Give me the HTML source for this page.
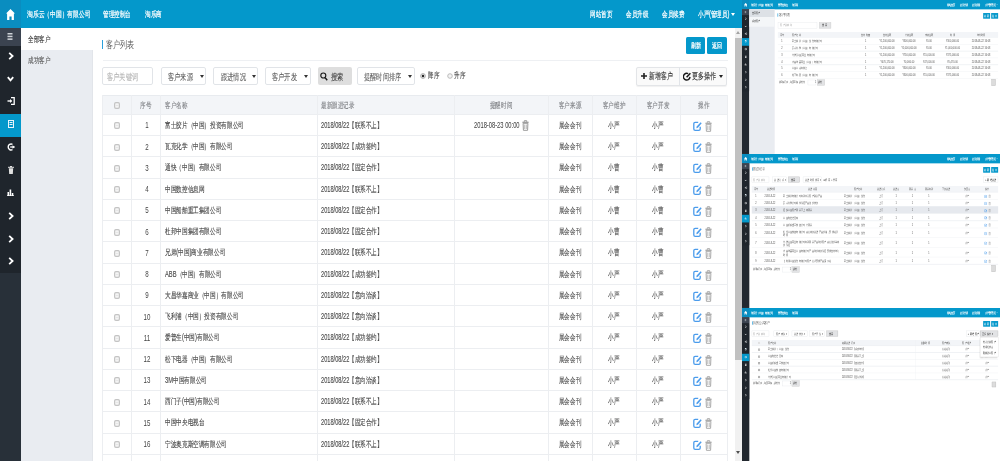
<!DOCTYPE html>
<html><head><meta charset="utf-8"><title>客户列表</title><style>
*{margin:0;padding:0;box-sizing:border-box}
html,body{width:1000px;height:461px;overflow:hidden;background:#fff;font-family:"Liberation Sans",sans-serif}
.a{position:absolute}
.t{position:absolute;white-space:nowrap;transform-origin:0 50%;-webkit-text-stroke:0.12px currentColor}
.th .t{-webkit-text-stroke:0}
</style></head>
<body>
<div style="position:absolute;left:0;top:0;width:1000px;height:461px;will-change:transform">
<div class="a" style="left:0px;top:0px;width:742px;height:28.3px;background:#0498cb"></div>
<div class="a" style="left:0px;top:0px;width:20.5px;height:28.3px;background:#0a8dc0"></div>
<svg class="a" style="left:6.25px;top:8.75px" width="9" height="11" viewBox="0 0 9 11"><path d="M4.5 0 L9 4.6 H7.9 V11 H5.6 V7.4 H3.4 V11 H1.1 V4.6 H0 Z" fill="#fff"/></svg>
<div class="t" style="left:27.2px;top:10.45px;font-size:8.3px;line-height:8.3px;color:#fff;transform:scaleX(0.72);-webkit-text-stroke:0.2px currentColor;">淘乐云（中国）有限公司</div>
<div class="t" style="left:103.2px;top:10.45px;font-size:8.3px;line-height:8.3px;color:#fff;transform:scaleX(0.69);-webkit-text-stroke:0.2px currentColor;">管理控制台</div>
<div class="t" style="left:144.8px;top:10.45px;font-size:8.3px;line-height:8.3px;color:#fff;transform:scaleX(0.69);-webkit-text-stroke:0.2px currentColor;">淘乐商</div>
<div class="t" style="left:589.6px;top:10.45px;font-size:8.3px;line-height:8.3px;color:#fff;transform:scaleX(0.69);-webkit-text-stroke:0.2px currentColor;">网站首页</div>
<div class="t" style="left:626.4px;top:10.45px;font-size:8.3px;line-height:8.3px;color:#fff;transform:scaleX(0.69);-webkit-text-stroke:0.2px currentColor;">会员升级</div>
<div class="t" style="left:662.4px;top:10.45px;font-size:8.3px;line-height:8.3px;color:#fff;transform:scaleX(0.69);-webkit-text-stroke:0.2px currentColor;">会员续费</div>
<div class="t" style="left:698px;top:10.45px;font-size:8.3px;line-height:8.3px;color:#fff;transform:scaleX(0.69);-webkit-text-stroke:0.2px currentColor;">小严(管理员)</div>
<svg class="a" style="left:731.00px;top:13.10px" width="4" height="3" viewBox="0 0 4 3"><path d="M0 0 L4 0 L2 3 Z" fill="#fff"/></svg>
<div class="a" style="left:0px;top:28px;width:20.5px;height:433px;background:#283039"></div>
<div class="a" style="left:0px;top:28px;width:20.5px;height:17.5px;background:#3b4350"></div>
<div class="a" style="left:0px;top:45.5px;width:20.5px;height:227.9px;background:#1f252c"></div>
<div class="a" style="left:0px;top:113.87px;width:20.5px;height:22.79px;background:#0498cb"></div>
<svg class="a" style="left:7.10px;top:33.30px" width="6" height="7" viewBox="0 0 6 7"><rect x="0.5" y="0" width="5" height="1.5" fill="#cfd3d8"/><rect x="0.5" y="2.7" width="5" height="1.5" fill="#cfd3d8"/><rect x="0.5" y="5.4" width="5" height="1.5" fill="#cfd3d8"/></svg>
<svg class="a" style="left:7.90px;top:52.00px" width="6" height="8" viewBox="0 0 6 8"><path d="M1.2 0.8 L4.6 4 L1.2 7.2" stroke="#fff" stroke-width="1.8" fill="none"/></svg>
<svg class="a" style="left:6.90px;top:75.50px" width="7" height="6" viewBox="0 0 7 6"><path d="M0.8 1.2 L3.5 4.4 L6.2 1.2" stroke="#fff" stroke-width="1.8" fill="none"/></svg>
<svg class="a" style="left:6.80px;top:97.00px" width="8" height="8" viewBox="0 0 8 8"><path d="M4 0.7 H7.2 V7.3 H4" stroke="#fff" stroke-width="1.3" fill="none"/><path d="M0.5 4 H4.5" stroke="#fff" stroke-width="1.4"/><path d="M3 2 L5.2 4 L3 6 Z" fill="#fff"/></svg>
<svg class="a" style="left:8.10px;top:120.40px" width="6" height="8" viewBox="0 0 6 8"><rect x="0.5" y="0.5" width="5" height="7" stroke="#e8f4fb" stroke-width="1" fill="none"/><rect x="1.5" y="2" width="3" height="1" fill="#e8f4fb"/><rect x="1.5" y="4" width="3" height="1" fill="#e8f4fb"/></svg>
<svg class="a" style="left:6.90px;top:142.80px" width="8" height="8" viewBox="0 0 8 8"><path d="M5.5 1.3 A3 3 0 1 0 5.5 6.7" stroke="#fff" stroke-width="1.4" fill="none"/><path d="M3.2 4 H7.5" stroke="#fff" stroke-width="1.3"/><path d="M5.5 2.2 L7.8 4 L5.5 5.8 Z" fill="#fff"/></svg>
<svg class="a" style="left:7.60px;top:165.60px" width="6" height="8" viewBox="0 0 6 8"><rect x="0" y="0.8" width="6" height="1" fill="#e0e0e0"/><rect x="2" y="0" width="2" height="1" fill="#e0e0e0"/><path d="M0.8 2.3 H5.2 L4.8 8 H1.2 Z" fill="#e0e0e0"/></svg>
<svg class="a" style="left:7.10px;top:189.00px" width="7" height="7" viewBox="0 0 7 7"><rect x="0.5" y="3" width="1.5" height="4" fill="#fff"/><rect x="2.6" y="0.5" width="1.6" height="6.5" fill="#fff"/><rect x="4.8" y="4" width="1.5" height="3" fill="#fff"/><rect x="0" y="6.3" width="7" height="0.8" fill="#fff"/></svg>
<svg class="a" style="left:7.90px;top:211.60px" width="6" height="8" viewBox="0 0 6 8"><path d="M1.2 0.8 L4.6 4 L1.2 7.2" stroke="#fff" stroke-width="1.8" fill="none"/></svg>
<svg class="a" style="left:7.90px;top:234.70px" width="6" height="8" viewBox="0 0 6 8"><path d="M1.2 0.8 L4.6 4 L1.2 7.2" stroke="#fff" stroke-width="1.8" fill="none"/></svg>
<svg class="a" style="left:7.90px;top:257.30px" width="6" height="8" viewBox="0 0 6 8"><path d="M1.2 0.8 L4.6 4 L1.2 7.2" stroke="#fff" stroke-width="1.8" fill="none"/></svg>
<div class="a" style="left:20.5px;top:28px;width:72px;height:433px;background:#e9ecf1;border-right:1px solid #e2e5ea"></div>
<div class="a" style="left:20.5px;top:28px;width:72px;height:22.3px;background:#fff"></div>
<div class="t" style="left:27.6px;top:35.90px;font-size:7.6px;line-height:7.6px;color:#333;transform:scaleX(0.69);">全部客户</div>
<div class="t" style="left:27.6px;top:57.20px;font-size:7.6px;line-height:7.6px;color:#555;transform:scaleX(0.69);">成功客户</div>
<div class="a" style="left:101.8px;top:40px;width:1.3px;height:9.3px;background:#2aa0dc"></div>
<div class="t" style="left:106px;top:39.85px;font-size:10.3px;line-height:10.3px;color:#555;transform:scaleX(0.7);-webkit-text-stroke:0px currentColor;">客户列表</div>
<div class="a" style="left:102.5px;top:59.7px;width:625px;height:1px;background:#eef0f3"></div>
<div class="a" style="left:686px;top:37.4px;width:19.3px;height:16.7px;background:#0498cb;border-radius:1.5px"></div>
<div class="t" style="left:695.8px;top:41.80px;font-size:7.2px;line-height:7.2px;color:#fff;transform:scaleX(0.72) translateX(-50%);-webkit-text-stroke:0.22px currentColor;">刷新</div>
<div class="a" style="left:707.4px;top:37.4px;width:19.5px;height:16.7px;background:#0498cb;border-radius:1.5px"></div>
<div class="t" style="left:717.2px;top:41.80px;font-size:7.2px;line-height:7.2px;color:#fff;transform:scaleX(0.72) translateX(-50%);-webkit-text-stroke:0.22px currentColor;">返回</div>
<div class="a" style="left:102.2px;top:66.9px;width:51.3px;height:18.4px;border:1px solid #e1e4e8;border-radius:2px;background:#fff"></div>
<div class="t" style="left:107.4px;top:72.80px;font-size:8.8px;line-height:8.8px;color:#b5b5b5;transform:scaleX(0.69);">客户关键词</div>
<div class="a" style="left:161px;top:67px;width:45px;height:18.3px;border:1px solid #e1e4e8;border-radius:2px;background:#fff"></div>
<div class="t" style="left:167.8px;top:72.85px;font-size:8.9px;line-height:8.9px;color:#555;transform:scaleX(0.69);-webkit-text-stroke:0.05px currentColor;">客户来源</div>
<svg class="a" style="left:199.50px;top:75.30px" width="4" height="3" viewBox="0 0 4 3"><path d="M0 0 L4 0 L2 3 Z" fill="#333"/></svg>
<div class="a" style="left:212.8px;top:67px;width:45.39999999999998px;height:18.3px;border:1px solid #e1e4e8;border-radius:2px;background:#fff"></div>
<div class="t" style="left:220.5px;top:72.85px;font-size:8.9px;line-height:8.9px;color:#555;transform:scaleX(0.69);-webkit-text-stroke:0.05px currentColor;">跟进情况</div>
<svg class="a" style="left:251.50px;top:75.30px" width="4" height="3" viewBox="0 0 4 3"><path d="M0 0 L4 0 L2 3 Z" fill="#333"/></svg>
<div class="a" style="left:265.2px;top:67px;width:45.400000000000034px;height:18.3px;border:1px solid #e1e4e8;border-radius:2px;background:#fff"></div>
<div class="t" style="left:272.3px;top:72.85px;font-size:8.9px;line-height:8.9px;color:#555;transform:scaleX(0.69);-webkit-text-stroke:0.05px currentColor;">客户开发</div>
<svg class="a" style="left:304.20px;top:75.30px" width="4" height="3" viewBox="0 0 4 3"><path d="M0 0 L4 0 L2 3 Z" fill="#333"/></svg>
<div class="a" style="left:317.5px;top:67px;width:34.5px;height:18.3px;background:#dedede;border-radius:2px"></div>
<svg class="a" style="left:320.40px;top:71.70px" width="8" height="9" viewBox="0 0 8 9"><circle cx="3.3" cy="3.5" r="2.5" stroke="#1a1a1a" stroke-width="1.15" fill="none"/><path d="M5.1 5.6 L7.2 8.2" stroke="#1a1a1a" stroke-width="1.5"/></svg>
<div class="t" style="left:330.5px;top:72.70px;font-size:8.6px;line-height:8.6px;color:#444;transform:scaleX(0.69);">搜索</div>
<div class="a" style="left:357px;top:67px;width:57.5px;height:18.3px;border:1px solid #e1e4e8;border-radius:2px;background:#fff"></div>
<div class="t" style="left:363.5px;top:72.85px;font-size:8.9px;line-height:8.9px;color:#555;transform:scaleX(0.69);-webkit-text-stroke:0.05px currentColor;">提醒时间排序</div>
<svg class="a" style="left:407.50px;top:75.30px" width="4" height="3" viewBox="0 0 4 3"><path d="M0 0 L4 0 L2 3 Z" fill="#333"/></svg>
<svg class="a" style="left:420.20px;top:73.00px" width="6" height="6" viewBox="0 0 6 6"><circle cx="3" cy="3" r="2.4" stroke="#aaa" stroke-width="0.9" fill="#e6e6e6"/><circle cx="3" cy="3" r="1.2" fill="#222"/></svg>
<div class="t" style="left:427.5px;top:71.70px;font-size:8.2px;line-height:8.2px;color:#444;transform:scaleX(0.69);">降序</div>
<svg class="a" style="left:446.60px;top:73.00px" width="6" height="6" viewBox="0 0 6 6"><circle cx="3" cy="3" r="2.3" stroke="#b5b5b5" stroke-width="0.9" fill="#f4f4f4"/></svg>
<div class="t" style="left:453.5px;top:71.70px;font-size:8.2px;line-height:8.2px;color:#444;transform:scaleX(0.69);">升序</div>
<div class="a" style="left:635.5px;top:67.2px;width:91.2px;height:18.4px;border:1px solid #e3e5e8;border-radius:2px;background:#fafafa;box-shadow:0 0.5px 1px rgba(0,0,0,.06)"></div>
<div class="a" style="left:678.6px;top:67.2px;width:1px;height:18.4px;background:#e1e4e8"></div>
<svg class="a" style="left:640.50px;top:73.40px" width="6" height="6" viewBox="0 0 6 6"><path d="M3 0 V6 M0 3 H6" stroke="#222" stroke-width="1.6"/></svg>
<div class="t" style="left:649.2px;top:72.30px;font-size:8.6px;line-height:8.6px;color:#333;transform:scaleX(0.65);">新增客户</div>
<svg class="a" style="left:683.00px;top:72.00px" width="8" height="9" viewBox="0 0 8 9"><path d="M5.2 1.6 A3.3 3.4 0 1 0 7 4.9" stroke="#1a1a1a" stroke-width="1.4" fill="none"/><path d="M3.6 5.2 L7.4 1.2" stroke="#1a1a1a" stroke-width="1.5"/></svg>
<div class="t" style="left:691.5px;top:72.30px;font-size:8.6px;line-height:8.6px;color:#333;transform:scaleX(0.67);">更多操作</div>
<svg class="a" style="left:718.60px;top:75.30px" width="4" height="3" viewBox="0 0 4 3"><path d="M0 0 L4 0 L2 3 Z" fill="#222"/></svg>
<div class="a" style="left:102px;top:95px;width:625px;height:19.25px;background:#f3f5f8"></div>
<div class="a" style="left:102px;top:95px;width:625px;height:1px;background:#e8ebef"></div>
<div class="a" style="left:102px;top:113.75px;width:625px;height:1px;background:#eceef1"></div>
<div class="a" style="left:102px;top:135.0px;width:625px;height:1px;background:#eceef1"></div>
<div class="a" style="left:102px;top:156.25px;width:625px;height:1px;background:#eceef1"></div>
<div class="a" style="left:102px;top:177.5px;width:625px;height:1px;background:#eceef1"></div>
<div class="a" style="left:102px;top:198.75px;width:625px;height:1px;background:#eceef1"></div>
<div class="a" style="left:102px;top:220.0px;width:625px;height:1px;background:#eceef1"></div>
<div class="a" style="left:102px;top:241.25px;width:625px;height:1px;background:#eceef1"></div>
<div class="a" style="left:102px;top:262.5px;width:625px;height:1px;background:#eceef1"></div>
<div class="a" style="left:102px;top:283.75px;width:625px;height:1px;background:#eceef1"></div>
<div class="a" style="left:102px;top:305.0px;width:625px;height:1px;background:#eceef1"></div>
<div class="a" style="left:102px;top:326.25px;width:625px;height:1px;background:#eceef1"></div>
<div class="a" style="left:102px;top:347.5px;width:625px;height:1px;background:#eceef1"></div>
<div class="a" style="left:102px;top:368.75px;width:625px;height:1px;background:#eceef1"></div>
<div class="a" style="left:102px;top:390.0px;width:625px;height:1px;background:#eceef1"></div>
<div class="a" style="left:102px;top:411.25px;width:625px;height:1px;background:#eceef1"></div>
<div class="a" style="left:102px;top:432.5px;width:625px;height:1px;background:#eceef1"></div>
<div class="a" style="left:102px;top:453.75px;width:625px;height:1px;background:#eceef1"></div>
<div class="a" style="left:102px;top:475.0px;width:625px;height:1px;background:#eceef1"></div>
<div class="a" style="left:101.5px;top:95px;width:1px;height:366px;background:#eceef1"></div>
<div class="a" style="left:131.0px;top:95px;width:1px;height:366px;background:#eceef1"></div>
<div class="a" style="left:160.1px;top:95px;width:1px;height:366px;background:#eceef1"></div>
<div class="a" style="left:316.5px;top:95px;width:1px;height:366px;background:#eceef1"></div>
<div class="a" style="left:453.5px;top:95px;width:1px;height:366px;background:#eceef1"></div>
<div class="a" style="left:547.5px;top:95px;width:1px;height:366px;background:#eceef1"></div>
<div class="a" style="left:592.0px;top:95px;width:1px;height:366px;background:#eceef1"></div>
<div class="a" style="left:635.5px;top:95px;width:1px;height:366px;background:#eceef1"></div>
<div class="a" style="left:679.5px;top:95px;width:1px;height:366px;background:#eceef1"></div>
<div class="a" style="left:726.5px;top:95px;width:1px;height:366px;background:#eceef1"></div>
<svg class="a" style="left:113.50px;top:102.10px" width="6" height="7" viewBox="0 0 6 7"><rect x="0.6" y="0.6" width="4.8" height="5.8" rx="1.3" stroke="#c4c4c4" stroke-width="1.2" fill="#f4f4f4"/><path d="M1.8 3.5 H4.2" stroke="#dcdcdc" stroke-width="0.6"/></svg>
<div class="t" style="left:146px;top:101.65px;font-size:7.9px;line-height:7.9px;color:#7d7f83;transform:scaleX(0.69) translateX(-50%);">序号</div>
<div class="t" style="left:165px;top:101.65px;font-size:7.9px;line-height:7.9px;color:#7d7f83;transform:scaleX(0.69);">客户名称</div>
<div class="t" style="left:321px;top:101.65px;font-size:7.9px;line-height:7.9px;color:#7d7f83;transform:scaleX(0.69);">最新跟进记录</div>
<div class="t" style="left:501px;top:101.65px;font-size:7.9px;line-height:7.9px;color:#7d7f83;transform:scaleX(0.69) translateX(-50%);">提醒时间</div>
<div class="t" style="left:570px;top:101.65px;font-size:7.9px;line-height:7.9px;color:#7d7f83;transform:scaleX(0.69) translateX(-50%);">客户来源</div>
<div class="t" style="left:614px;top:101.65px;font-size:7.9px;line-height:7.9px;color:#7d7f83;transform:scaleX(0.69) translateX(-50%);">客户维护</div>
<div class="t" style="left:658px;top:101.65px;font-size:7.9px;line-height:7.9px;color:#7d7f83;transform:scaleX(0.69) translateX(-50%);">客户开发</div>
<div class="t" style="left:703.5px;top:101.65px;font-size:7.9px;line-height:7.9px;color:#7d7f83;transform:scaleX(0.69) translateX(-50%);">操作</div>
<svg class="a" style="left:113.50px;top:122.47px" width="6" height="7" viewBox="0 0 6 7"><rect x="0.6" y="0.6" width="4.8" height="5.8" rx="1.3" stroke="#c4c4c4" stroke-width="1.2" fill="#f4f4f4"/><path d="M1.8 3.5 H4.2" stroke="#dcdcdc" stroke-width="0.6"/></svg>
<div class="t" style="left:146.6px;top:122.38px;font-size:8.2px;line-height:8.2px;color:#444;transform:scaleX(0.75) translateX(-50%);-webkit-text-stroke:0px currentColor;">1</div>
<div class="t" style="left:164.8px;top:121.88px;font-size:8.2px;line-height:8.2px;color:#464646;transform:scaleX(0.705);">富士胶片（中国）投资有限公司</div>
<div class="t" style="left:321px;top:121.88px;font-size:8.2px;line-height:8.2px;color:#464646;transform:scaleX(0.69);">2018/08/22【联系不上】</div>
<div class="t" style="left:474px;top:122.28px;font-size:8.2px;line-height:8.2px;color:#444;transform:scaleX(0.705);-webkit-text-stroke:0.05px currentColor;">2018-08-23 00:00</div>
<svg class="a" style="left:521.50px;top:120.47px" width="7" height="11" viewBox="0 0 7 11"><path d="M0.4 2.3 H6.6" stroke="#999" stroke-width="1.3"/><path d="M2.3 1.8 V0.7 H4.7 V1.8" stroke="#999" stroke-width="1" fill="none"/><path d="M1.1 3.3 H5.9 L5.6 10.3 H1.4 Z" stroke="#999" stroke-width="1" fill="none"/><path d="M2.7 4.5 V9 M4.3 4.5 V9" stroke="#999" stroke-width="0.7"/></svg>
<div class="t" style="left:570px;top:121.88px;font-size:8.2px;line-height:8.2px;color:#555;transform:scaleX(0.69) translateX(-50%);">展会会刊</div>
<div class="t" style="left:614px;top:121.88px;font-size:8.2px;line-height:8.2px;color:#555;transform:scaleX(0.69) translateX(-50%);">小严</div>
<div class="t" style="left:658px;top:121.88px;font-size:8.2px;line-height:8.2px;color:#555;transform:scaleX(0.69) translateX(-50%);">小严</div>
<svg class="a" style="left:693.20px;top:120.97px" width="9" height="10" viewBox="0 0 9 10"><path d="M5.2 1.4 H2.2 Q0.8 1.4 0.8 2.8 V8 Q0.8 9.3 2.2 9.3 H5.8 Q7.2 9.3 7.2 8 V5.8" stroke="#4b9cec" stroke-width="1.3" fill="none"/><path d="M3.3 7.3 L3.7 5.6 L7.6 1.3 L8.7 2.3 L4.9 6.8 Z" fill="#4b9cec"/></svg>
<svg class="a" style="left:705.00px;top:120.88px" width="7" height="11" viewBox="0 0 7 11"><path d="M0.4 2.3 H6.6" stroke="#a8a8a8" stroke-width="1.3"/><path d="M2.3 1.8 V0.7 H4.7 V1.8" stroke="#a8a8a8" stroke-width="1" fill="none"/><path d="M1.1 3.3 H5.9 L5.6 10.3 H1.4 Z" stroke="#a8a8a8" stroke-width="1" fill="none"/><path d="M2.7 4.5 V9 M4.3 4.5 V9" stroke="#a8a8a8" stroke-width="0.7"/></svg>
<svg class="a" style="left:113.50px;top:143.72px" width="6" height="7" viewBox="0 0 6 7"><rect x="0.6" y="0.6" width="4.8" height="5.8" rx="1.3" stroke="#c4c4c4" stroke-width="1.2" fill="#f4f4f4"/><path d="M1.8 3.5 H4.2" stroke="#dcdcdc" stroke-width="0.6"/></svg>
<div class="t" style="left:146.6px;top:143.62px;font-size:8.2px;line-height:8.2px;color:#444;transform:scaleX(0.75) translateX(-50%);-webkit-text-stroke:0px currentColor;">2</div>
<div class="t" style="left:164.8px;top:143.12px;font-size:8.2px;line-height:8.2px;color:#464646;transform:scaleX(0.705);">瓦克化学（中国）有限公司</div>
<div class="t" style="left:321px;top:143.12px;font-size:8.2px;line-height:8.2px;color:#464646;transform:scaleX(0.69);">2018/08/22【成功签约】</div>
<div class="t" style="left:570px;top:143.12px;font-size:8.2px;line-height:8.2px;color:#555;transform:scaleX(0.69) translateX(-50%);">展会会刊</div>
<div class="t" style="left:614px;top:143.12px;font-size:8.2px;line-height:8.2px;color:#555;transform:scaleX(0.69) translateX(-50%);">小严</div>
<div class="t" style="left:658px;top:143.12px;font-size:8.2px;line-height:8.2px;color:#555;transform:scaleX(0.69) translateX(-50%);">小严</div>
<svg class="a" style="left:693.20px;top:142.22px" width="9" height="10" viewBox="0 0 9 10"><path d="M5.2 1.4 H2.2 Q0.8 1.4 0.8 2.8 V8 Q0.8 9.3 2.2 9.3 H5.8 Q7.2 9.3 7.2 8 V5.8" stroke="#4b9cec" stroke-width="1.3" fill="none"/><path d="M3.3 7.3 L3.7 5.6 L7.6 1.3 L8.7 2.3 L4.9 6.8 Z" fill="#4b9cec"/></svg>
<svg class="a" style="left:705.00px;top:142.12px" width="7" height="11" viewBox="0 0 7 11"><path d="M0.4 2.3 H6.6" stroke="#a8a8a8" stroke-width="1.3"/><path d="M2.3 1.8 V0.7 H4.7 V1.8" stroke="#a8a8a8" stroke-width="1" fill="none"/><path d="M1.1 3.3 H5.9 L5.6 10.3 H1.4 Z" stroke="#a8a8a8" stroke-width="1" fill="none"/><path d="M2.7 4.5 V9 M4.3 4.5 V9" stroke="#a8a8a8" stroke-width="0.7"/></svg>
<svg class="a" style="left:113.50px;top:164.97px" width="6" height="7" viewBox="0 0 6 7"><rect x="0.6" y="0.6" width="4.8" height="5.8" rx="1.3" stroke="#c4c4c4" stroke-width="1.2" fill="#f4f4f4"/><path d="M1.8 3.5 H4.2" stroke="#dcdcdc" stroke-width="0.6"/></svg>
<div class="t" style="left:146.6px;top:164.88px;font-size:8.2px;line-height:8.2px;color:#444;transform:scaleX(0.75) translateX(-50%);-webkit-text-stroke:0px currentColor;">3</div>
<div class="t" style="left:164.8px;top:164.38px;font-size:8.2px;line-height:8.2px;color:#464646;transform:scaleX(0.705);">通快（中国）有限公司</div>
<div class="t" style="left:321px;top:164.38px;font-size:8.2px;line-height:8.2px;color:#464646;transform:scaleX(0.69);">2018/08/22【固定合作】</div>
<div class="t" style="left:570px;top:164.38px;font-size:8.2px;line-height:8.2px;color:#555;transform:scaleX(0.69) translateX(-50%);">展会会刊</div>
<div class="t" style="left:614px;top:164.38px;font-size:8.2px;line-height:8.2px;color:#555;transform:scaleX(0.69) translateX(-50%);">小曹</div>
<div class="t" style="left:658px;top:164.38px;font-size:8.2px;line-height:8.2px;color:#555;transform:scaleX(0.69) translateX(-50%);">小曹</div>
<svg class="a" style="left:693.20px;top:163.47px" width="9" height="10" viewBox="0 0 9 10"><path d="M5.2 1.4 H2.2 Q0.8 1.4 0.8 2.8 V8 Q0.8 9.3 2.2 9.3 H5.8 Q7.2 9.3 7.2 8 V5.8" stroke="#4b9cec" stroke-width="1.3" fill="none"/><path d="M3.3 7.3 L3.7 5.6 L7.6 1.3 L8.7 2.3 L4.9 6.8 Z" fill="#4b9cec"/></svg>
<svg class="a" style="left:705.00px;top:163.38px" width="7" height="11" viewBox="0 0 7 11"><path d="M0.4 2.3 H6.6" stroke="#a8a8a8" stroke-width="1.3"/><path d="M2.3 1.8 V0.7 H4.7 V1.8" stroke="#a8a8a8" stroke-width="1" fill="none"/><path d="M1.1 3.3 H5.9 L5.6 10.3 H1.4 Z" stroke="#a8a8a8" stroke-width="1" fill="none"/><path d="M2.7 4.5 V9 M4.3 4.5 V9" stroke="#a8a8a8" stroke-width="0.7"/></svg>
<svg class="a" style="left:113.50px;top:186.22px" width="6" height="7" viewBox="0 0 6 7"><rect x="0.6" y="0.6" width="4.8" height="5.8" rx="1.3" stroke="#c4c4c4" stroke-width="1.2" fill="#f4f4f4"/><path d="M1.8 3.5 H4.2" stroke="#dcdcdc" stroke-width="0.6"/></svg>
<div class="t" style="left:146.6px;top:186.12px;font-size:8.2px;line-height:8.2px;color:#444;transform:scaleX(0.75) translateX(-50%);-webkit-text-stroke:0px currentColor;">4</div>
<div class="t" style="left:164.8px;top:185.62px;font-size:8.2px;line-height:8.2px;color:#464646;transform:scaleX(0.705);">中国数控信息网</div>
<div class="t" style="left:321px;top:185.62px;font-size:8.2px;line-height:8.2px;color:#464646;transform:scaleX(0.69);">2018/08/22【联系不上】</div>
<div class="t" style="left:570px;top:185.62px;font-size:8.2px;line-height:8.2px;color:#555;transform:scaleX(0.69) translateX(-50%);">展会会刊</div>
<div class="t" style="left:614px;top:185.62px;font-size:8.2px;line-height:8.2px;color:#555;transform:scaleX(0.69) translateX(-50%);">小曹</div>
<div class="t" style="left:658px;top:185.62px;font-size:8.2px;line-height:8.2px;color:#555;transform:scaleX(0.69) translateX(-50%);">小曹</div>
<svg class="a" style="left:693.20px;top:184.72px" width="9" height="10" viewBox="0 0 9 10"><path d="M5.2 1.4 H2.2 Q0.8 1.4 0.8 2.8 V8 Q0.8 9.3 2.2 9.3 H5.8 Q7.2 9.3 7.2 8 V5.8" stroke="#4b9cec" stroke-width="1.3" fill="none"/><path d="M3.3 7.3 L3.7 5.6 L7.6 1.3 L8.7 2.3 L4.9 6.8 Z" fill="#4b9cec"/></svg>
<svg class="a" style="left:705.00px;top:184.62px" width="7" height="11" viewBox="0 0 7 11"><path d="M0.4 2.3 H6.6" stroke="#a8a8a8" stroke-width="1.3"/><path d="M2.3 1.8 V0.7 H4.7 V1.8" stroke="#a8a8a8" stroke-width="1" fill="none"/><path d="M1.1 3.3 H5.9 L5.6 10.3 H1.4 Z" stroke="#a8a8a8" stroke-width="1" fill="none"/><path d="M2.7 4.5 V9 M4.3 4.5 V9" stroke="#a8a8a8" stroke-width="0.7"/></svg>
<svg class="a" style="left:113.50px;top:207.47px" width="6" height="7" viewBox="0 0 6 7"><rect x="0.6" y="0.6" width="4.8" height="5.8" rx="1.3" stroke="#c4c4c4" stroke-width="1.2" fill="#f4f4f4"/><path d="M1.8 3.5 H4.2" stroke="#dcdcdc" stroke-width="0.6"/></svg>
<div class="t" style="left:146.6px;top:207.38px;font-size:8.2px;line-height:8.2px;color:#444;transform:scaleX(0.75) translateX(-50%);-webkit-text-stroke:0px currentColor;">5</div>
<div class="t" style="left:164.8px;top:206.88px;font-size:8.2px;line-height:8.2px;color:#464646;transform:scaleX(0.705);">中国船舶重工集团公司</div>
<div class="t" style="left:321px;top:206.88px;font-size:8.2px;line-height:8.2px;color:#464646;transform:scaleX(0.69);">2018/08/22【固定合作】</div>
<div class="t" style="left:570px;top:206.88px;font-size:8.2px;line-height:8.2px;color:#555;transform:scaleX(0.69) translateX(-50%);">展会会刊</div>
<div class="t" style="left:614px;top:206.88px;font-size:8.2px;line-height:8.2px;color:#555;transform:scaleX(0.69) translateX(-50%);">小曹</div>
<div class="t" style="left:658px;top:206.88px;font-size:8.2px;line-height:8.2px;color:#555;transform:scaleX(0.69) translateX(-50%);">小曹</div>
<svg class="a" style="left:693.20px;top:205.97px" width="9" height="10" viewBox="0 0 9 10"><path d="M5.2 1.4 H2.2 Q0.8 1.4 0.8 2.8 V8 Q0.8 9.3 2.2 9.3 H5.8 Q7.2 9.3 7.2 8 V5.8" stroke="#4b9cec" stroke-width="1.3" fill="none"/><path d="M3.3 7.3 L3.7 5.6 L7.6 1.3 L8.7 2.3 L4.9 6.8 Z" fill="#4b9cec"/></svg>
<svg class="a" style="left:705.00px;top:205.88px" width="7" height="11" viewBox="0 0 7 11"><path d="M0.4 2.3 H6.6" stroke="#a8a8a8" stroke-width="1.3"/><path d="M2.3 1.8 V0.7 H4.7 V1.8" stroke="#a8a8a8" stroke-width="1" fill="none"/><path d="M1.1 3.3 H5.9 L5.6 10.3 H1.4 Z" stroke="#a8a8a8" stroke-width="1" fill="none"/><path d="M2.7 4.5 V9 M4.3 4.5 V9" stroke="#a8a8a8" stroke-width="0.7"/></svg>
<svg class="a" style="left:113.50px;top:228.72px" width="6" height="7" viewBox="0 0 6 7"><rect x="0.6" y="0.6" width="4.8" height="5.8" rx="1.3" stroke="#c4c4c4" stroke-width="1.2" fill="#f4f4f4"/><path d="M1.8 3.5 H4.2" stroke="#dcdcdc" stroke-width="0.6"/></svg>
<div class="t" style="left:146.6px;top:228.62px;font-size:8.2px;line-height:8.2px;color:#444;transform:scaleX(0.75) translateX(-50%);-webkit-text-stroke:0px currentColor;">6</div>
<div class="t" style="left:164.8px;top:228.12px;font-size:8.2px;line-height:8.2px;color:#464646;transform:scaleX(0.705);">杜邦中国集团有限公司</div>
<div class="t" style="left:321px;top:228.12px;font-size:8.2px;line-height:8.2px;color:#464646;transform:scaleX(0.69);">2018/08/22【固定合作】</div>
<div class="t" style="left:570px;top:228.12px;font-size:8.2px;line-height:8.2px;color:#555;transform:scaleX(0.69) translateX(-50%);">展会会刊</div>
<div class="t" style="left:614px;top:228.12px;font-size:8.2px;line-height:8.2px;color:#555;transform:scaleX(0.69) translateX(-50%);">小曹</div>
<div class="t" style="left:658px;top:228.12px;font-size:8.2px;line-height:8.2px;color:#555;transform:scaleX(0.69) translateX(-50%);">小曹</div>
<svg class="a" style="left:693.20px;top:227.22px" width="9" height="10" viewBox="0 0 9 10"><path d="M5.2 1.4 H2.2 Q0.8 1.4 0.8 2.8 V8 Q0.8 9.3 2.2 9.3 H5.8 Q7.2 9.3 7.2 8 V5.8" stroke="#4b9cec" stroke-width="1.3" fill="none"/><path d="M3.3 7.3 L3.7 5.6 L7.6 1.3 L8.7 2.3 L4.9 6.8 Z" fill="#4b9cec"/></svg>
<svg class="a" style="left:705.00px;top:227.12px" width="7" height="11" viewBox="0 0 7 11"><path d="M0.4 2.3 H6.6" stroke="#a8a8a8" stroke-width="1.3"/><path d="M2.3 1.8 V0.7 H4.7 V1.8" stroke="#a8a8a8" stroke-width="1" fill="none"/><path d="M1.1 3.3 H5.9 L5.6 10.3 H1.4 Z" stroke="#a8a8a8" stroke-width="1" fill="none"/><path d="M2.7 4.5 V9 M4.3 4.5 V9" stroke="#a8a8a8" stroke-width="0.7"/></svg>
<svg class="a" style="left:113.50px;top:249.97px" width="6" height="7" viewBox="0 0 6 7"><rect x="0.6" y="0.6" width="4.8" height="5.8" rx="1.3" stroke="#c4c4c4" stroke-width="1.2" fill="#f4f4f4"/><path d="M1.8 3.5 H4.2" stroke="#dcdcdc" stroke-width="0.6"/></svg>
<div class="t" style="left:146.6px;top:249.88px;font-size:8.2px;line-height:8.2px;color:#444;transform:scaleX(0.75) translateX(-50%);-webkit-text-stroke:0px currentColor;">7</div>
<div class="t" style="left:164.8px;top:249.38px;font-size:8.2px;line-height:8.2px;color:#464646;transform:scaleX(0.705);">兄弟(中国)商业有限公司</div>
<div class="t" style="left:321px;top:249.38px;font-size:8.2px;line-height:8.2px;color:#464646;transform:scaleX(0.69);">2018/08/22【联系不上】</div>
<div class="t" style="left:570px;top:249.38px;font-size:8.2px;line-height:8.2px;color:#555;transform:scaleX(0.69) translateX(-50%);">展会会刊</div>
<div class="t" style="left:614px;top:249.38px;font-size:8.2px;line-height:8.2px;color:#555;transform:scaleX(0.69) translateX(-50%);">小曹</div>
<div class="t" style="left:658px;top:249.38px;font-size:8.2px;line-height:8.2px;color:#555;transform:scaleX(0.69) translateX(-50%);">小曹</div>
<svg class="a" style="left:693.20px;top:248.47px" width="9" height="10" viewBox="0 0 9 10"><path d="M5.2 1.4 H2.2 Q0.8 1.4 0.8 2.8 V8 Q0.8 9.3 2.2 9.3 H5.8 Q7.2 9.3 7.2 8 V5.8" stroke="#4b9cec" stroke-width="1.3" fill="none"/><path d="M3.3 7.3 L3.7 5.6 L7.6 1.3 L8.7 2.3 L4.9 6.8 Z" fill="#4b9cec"/></svg>
<svg class="a" style="left:705.00px;top:248.38px" width="7" height="11" viewBox="0 0 7 11"><path d="M0.4 2.3 H6.6" stroke="#a8a8a8" stroke-width="1.3"/><path d="M2.3 1.8 V0.7 H4.7 V1.8" stroke="#a8a8a8" stroke-width="1" fill="none"/><path d="M1.1 3.3 H5.9 L5.6 10.3 H1.4 Z" stroke="#a8a8a8" stroke-width="1" fill="none"/><path d="M2.7 4.5 V9 M4.3 4.5 V9" stroke="#a8a8a8" stroke-width="0.7"/></svg>
<svg class="a" style="left:113.50px;top:271.23px" width="6" height="7" viewBox="0 0 6 7"><rect x="0.6" y="0.6" width="4.8" height="5.8" rx="1.3" stroke="#c4c4c4" stroke-width="1.2" fill="#f4f4f4"/><path d="M1.8 3.5 H4.2" stroke="#dcdcdc" stroke-width="0.6"/></svg>
<div class="t" style="left:146.6px;top:271.12px;font-size:8.2px;line-height:8.2px;color:#444;transform:scaleX(0.75) translateX(-50%);-webkit-text-stroke:0px currentColor;">8</div>
<div class="t" style="left:164.8px;top:270.62px;font-size:8.2px;line-height:8.2px;color:#464646;transform:scaleX(0.705);">ABB（中国）有限公司</div>
<div class="t" style="left:321px;top:270.62px;font-size:8.2px;line-height:8.2px;color:#464646;transform:scaleX(0.69);">2018/08/22【成功签约】</div>
<div class="t" style="left:570px;top:270.62px;font-size:8.2px;line-height:8.2px;color:#555;transform:scaleX(0.69) translateX(-50%);">展会会刊</div>
<div class="t" style="left:614px;top:270.62px;font-size:8.2px;line-height:8.2px;color:#555;transform:scaleX(0.69) translateX(-50%);">小严</div>
<div class="t" style="left:658px;top:270.62px;font-size:8.2px;line-height:8.2px;color:#555;transform:scaleX(0.69) translateX(-50%);">小严</div>
<svg class="a" style="left:693.20px;top:269.73px" width="9" height="10" viewBox="0 0 9 10"><path d="M5.2 1.4 H2.2 Q0.8 1.4 0.8 2.8 V8 Q0.8 9.3 2.2 9.3 H5.8 Q7.2 9.3 7.2 8 V5.8" stroke="#4b9cec" stroke-width="1.3" fill="none"/><path d="M3.3 7.3 L3.7 5.6 L7.6 1.3 L8.7 2.3 L4.9 6.8 Z" fill="#4b9cec"/></svg>
<svg class="a" style="left:705.00px;top:269.62px" width="7" height="11" viewBox="0 0 7 11"><path d="M0.4 2.3 H6.6" stroke="#a8a8a8" stroke-width="1.3"/><path d="M2.3 1.8 V0.7 H4.7 V1.8" stroke="#a8a8a8" stroke-width="1" fill="none"/><path d="M1.1 3.3 H5.9 L5.6 10.3 H1.4 Z" stroke="#a8a8a8" stroke-width="1" fill="none"/><path d="M2.7 4.5 V9 M4.3 4.5 V9" stroke="#a8a8a8" stroke-width="0.7"/></svg>
<svg class="a" style="left:113.50px;top:292.48px" width="6" height="7" viewBox="0 0 6 7"><rect x="0.6" y="0.6" width="4.8" height="5.8" rx="1.3" stroke="#c4c4c4" stroke-width="1.2" fill="#f4f4f4"/><path d="M1.8 3.5 H4.2" stroke="#dcdcdc" stroke-width="0.6"/></svg>
<div class="t" style="left:146.6px;top:292.38px;font-size:8.2px;line-height:8.2px;color:#444;transform:scaleX(0.75) translateX(-50%);-webkit-text-stroke:0px currentColor;">9</div>
<div class="t" style="left:164.8px;top:291.88px;font-size:8.2px;line-height:8.2px;color:#464646;transform:scaleX(0.705);">大昌华嘉商业（中国）有限公司</div>
<div class="t" style="left:321px;top:291.88px;font-size:8.2px;line-height:8.2px;color:#464646;transform:scaleX(0.69);">2018/08/22【意向洽谈】</div>
<div class="t" style="left:570px;top:291.88px;font-size:8.2px;line-height:8.2px;color:#555;transform:scaleX(0.69) translateX(-50%);">展会会刊</div>
<div class="t" style="left:614px;top:291.88px;font-size:8.2px;line-height:8.2px;color:#555;transform:scaleX(0.69) translateX(-50%);">小严</div>
<div class="t" style="left:658px;top:291.88px;font-size:8.2px;line-height:8.2px;color:#555;transform:scaleX(0.69) translateX(-50%);">小严</div>
<svg class="a" style="left:693.20px;top:290.98px" width="9" height="10" viewBox="0 0 9 10"><path d="M5.2 1.4 H2.2 Q0.8 1.4 0.8 2.8 V8 Q0.8 9.3 2.2 9.3 H5.8 Q7.2 9.3 7.2 8 V5.8" stroke="#4b9cec" stroke-width="1.3" fill="none"/><path d="M3.3 7.3 L3.7 5.6 L7.6 1.3 L8.7 2.3 L4.9 6.8 Z" fill="#4b9cec"/></svg>
<svg class="a" style="left:705.00px;top:290.88px" width="7" height="11" viewBox="0 0 7 11"><path d="M0.4 2.3 H6.6" stroke="#a8a8a8" stroke-width="1.3"/><path d="M2.3 1.8 V0.7 H4.7 V1.8" stroke="#a8a8a8" stroke-width="1" fill="none"/><path d="M1.1 3.3 H5.9 L5.6 10.3 H1.4 Z" stroke="#a8a8a8" stroke-width="1" fill="none"/><path d="M2.7 4.5 V9 M4.3 4.5 V9" stroke="#a8a8a8" stroke-width="0.7"/></svg>
<svg class="a" style="left:113.50px;top:313.73px" width="6" height="7" viewBox="0 0 6 7"><rect x="0.6" y="0.6" width="4.8" height="5.8" rx="1.3" stroke="#c4c4c4" stroke-width="1.2" fill="#f4f4f4"/><path d="M1.8 3.5 H4.2" stroke="#dcdcdc" stroke-width="0.6"/></svg>
<div class="t" style="left:146.6px;top:313.62px;font-size:8.2px;line-height:8.2px;color:#444;transform:scaleX(0.75) translateX(-50%);-webkit-text-stroke:0px currentColor;">10</div>
<div class="t" style="left:164.8px;top:313.12px;font-size:8.2px;line-height:8.2px;color:#464646;transform:scaleX(0.705);">飞利浦（中国）投资有限公司</div>
<div class="t" style="left:321px;top:313.12px;font-size:8.2px;line-height:8.2px;color:#464646;transform:scaleX(0.69);">2018/08/22【意向洽谈】</div>
<div class="t" style="left:570px;top:313.12px;font-size:8.2px;line-height:8.2px;color:#555;transform:scaleX(0.69) translateX(-50%);">展会会刊</div>
<div class="t" style="left:614px;top:313.12px;font-size:8.2px;line-height:8.2px;color:#555;transform:scaleX(0.69) translateX(-50%);">小严</div>
<div class="t" style="left:658px;top:313.12px;font-size:8.2px;line-height:8.2px;color:#555;transform:scaleX(0.69) translateX(-50%);">小严</div>
<svg class="a" style="left:693.20px;top:312.23px" width="9" height="10" viewBox="0 0 9 10"><path d="M5.2 1.4 H2.2 Q0.8 1.4 0.8 2.8 V8 Q0.8 9.3 2.2 9.3 H5.8 Q7.2 9.3 7.2 8 V5.8" stroke="#4b9cec" stroke-width="1.3" fill="none"/><path d="M3.3 7.3 L3.7 5.6 L7.6 1.3 L8.7 2.3 L4.9 6.8 Z" fill="#4b9cec"/></svg>
<svg class="a" style="left:705.00px;top:312.12px" width="7" height="11" viewBox="0 0 7 11"><path d="M0.4 2.3 H6.6" stroke="#a8a8a8" stroke-width="1.3"/><path d="M2.3 1.8 V0.7 H4.7 V1.8" stroke="#a8a8a8" stroke-width="1" fill="none"/><path d="M1.1 3.3 H5.9 L5.6 10.3 H1.4 Z" stroke="#a8a8a8" stroke-width="1" fill="none"/><path d="M2.7 4.5 V9 M4.3 4.5 V9" stroke="#a8a8a8" stroke-width="0.7"/></svg>
<svg class="a" style="left:113.50px;top:334.98px" width="6" height="7" viewBox="0 0 6 7"><rect x="0.6" y="0.6" width="4.8" height="5.8" rx="1.3" stroke="#c4c4c4" stroke-width="1.2" fill="#f4f4f4"/><path d="M1.8 3.5 H4.2" stroke="#dcdcdc" stroke-width="0.6"/></svg>
<div class="t" style="left:146.6px;top:334.88px;font-size:8.2px;line-height:8.2px;color:#444;transform:scaleX(0.75) translateX(-50%);-webkit-text-stroke:0px currentColor;">11</div>
<div class="t" style="left:164.8px;top:334.38px;font-size:8.2px;line-height:8.2px;color:#464646;transform:scaleX(0.705);">爱普生(中国)有限公司</div>
<div class="t" style="left:321px;top:334.38px;font-size:8.2px;line-height:8.2px;color:#464646;transform:scaleX(0.69);">2018/08/22【成功签约】</div>
<div class="t" style="left:570px;top:334.38px;font-size:8.2px;line-height:8.2px;color:#555;transform:scaleX(0.69) translateX(-50%);">展会会刊</div>
<div class="t" style="left:614px;top:334.38px;font-size:8.2px;line-height:8.2px;color:#555;transform:scaleX(0.69) translateX(-50%);">小严</div>
<div class="t" style="left:658px;top:334.38px;font-size:8.2px;line-height:8.2px;color:#555;transform:scaleX(0.69) translateX(-50%);">小严</div>
<svg class="a" style="left:693.20px;top:333.48px" width="9" height="10" viewBox="0 0 9 10"><path d="M5.2 1.4 H2.2 Q0.8 1.4 0.8 2.8 V8 Q0.8 9.3 2.2 9.3 H5.8 Q7.2 9.3 7.2 8 V5.8" stroke="#4b9cec" stroke-width="1.3" fill="none"/><path d="M3.3 7.3 L3.7 5.6 L7.6 1.3 L8.7 2.3 L4.9 6.8 Z" fill="#4b9cec"/></svg>
<svg class="a" style="left:705.00px;top:333.38px" width="7" height="11" viewBox="0 0 7 11"><path d="M0.4 2.3 H6.6" stroke="#a8a8a8" stroke-width="1.3"/><path d="M2.3 1.8 V0.7 H4.7 V1.8" stroke="#a8a8a8" stroke-width="1" fill="none"/><path d="M1.1 3.3 H5.9 L5.6 10.3 H1.4 Z" stroke="#a8a8a8" stroke-width="1" fill="none"/><path d="M2.7 4.5 V9 M4.3 4.5 V9" stroke="#a8a8a8" stroke-width="0.7"/></svg>
<svg class="a" style="left:113.50px;top:356.23px" width="6" height="7" viewBox="0 0 6 7"><rect x="0.6" y="0.6" width="4.8" height="5.8" rx="1.3" stroke="#c4c4c4" stroke-width="1.2" fill="#f4f4f4"/><path d="M1.8 3.5 H4.2" stroke="#dcdcdc" stroke-width="0.6"/></svg>
<div class="t" style="left:146.6px;top:356.12px;font-size:8.2px;line-height:8.2px;color:#444;transform:scaleX(0.75) translateX(-50%);-webkit-text-stroke:0px currentColor;">12</div>
<div class="t" style="left:164.8px;top:355.62px;font-size:8.2px;line-height:8.2px;color:#464646;transform:scaleX(0.705);">松下电器（中国）有限公司</div>
<div class="t" style="left:321px;top:355.62px;font-size:8.2px;line-height:8.2px;color:#464646;transform:scaleX(0.69);">2018/08/22【成功签约】</div>
<div class="t" style="left:570px;top:355.62px;font-size:8.2px;line-height:8.2px;color:#555;transform:scaleX(0.69) translateX(-50%);">展会会刊</div>
<div class="t" style="left:614px;top:355.62px;font-size:8.2px;line-height:8.2px;color:#555;transform:scaleX(0.69) translateX(-50%);">小严</div>
<div class="t" style="left:658px;top:355.62px;font-size:8.2px;line-height:8.2px;color:#555;transform:scaleX(0.69) translateX(-50%);">小严</div>
<svg class="a" style="left:693.20px;top:354.73px" width="9" height="10" viewBox="0 0 9 10"><path d="M5.2 1.4 H2.2 Q0.8 1.4 0.8 2.8 V8 Q0.8 9.3 2.2 9.3 H5.8 Q7.2 9.3 7.2 8 V5.8" stroke="#4b9cec" stroke-width="1.3" fill="none"/><path d="M3.3 7.3 L3.7 5.6 L7.6 1.3 L8.7 2.3 L4.9 6.8 Z" fill="#4b9cec"/></svg>
<svg class="a" style="left:705.00px;top:354.62px" width="7" height="11" viewBox="0 0 7 11"><path d="M0.4 2.3 H6.6" stroke="#a8a8a8" stroke-width="1.3"/><path d="M2.3 1.8 V0.7 H4.7 V1.8" stroke="#a8a8a8" stroke-width="1" fill="none"/><path d="M1.1 3.3 H5.9 L5.6 10.3 H1.4 Z" stroke="#a8a8a8" stroke-width="1" fill="none"/><path d="M2.7 4.5 V9 M4.3 4.5 V9" stroke="#a8a8a8" stroke-width="0.7"/></svg>
<svg class="a" style="left:113.50px;top:377.48px" width="6" height="7" viewBox="0 0 6 7"><rect x="0.6" y="0.6" width="4.8" height="5.8" rx="1.3" stroke="#c4c4c4" stroke-width="1.2" fill="#f4f4f4"/><path d="M1.8 3.5 H4.2" stroke="#dcdcdc" stroke-width="0.6"/></svg>
<div class="t" style="left:146.6px;top:377.38px;font-size:8.2px;line-height:8.2px;color:#444;transform:scaleX(0.75) translateX(-50%);-webkit-text-stroke:0px currentColor;">13</div>
<div class="t" style="left:164.8px;top:376.88px;font-size:8.2px;line-height:8.2px;color:#464646;transform:scaleX(0.705);">3M中国有限公司</div>
<div class="t" style="left:321px;top:376.88px;font-size:8.2px;line-height:8.2px;color:#464646;transform:scaleX(0.69);">2018/08/22【意向洽谈】</div>
<div class="t" style="left:570px;top:376.88px;font-size:8.2px;line-height:8.2px;color:#555;transform:scaleX(0.69) translateX(-50%);">展会会刊</div>
<div class="t" style="left:614px;top:376.88px;font-size:8.2px;line-height:8.2px;color:#555;transform:scaleX(0.69) translateX(-50%);">小严</div>
<div class="t" style="left:658px;top:376.88px;font-size:8.2px;line-height:8.2px;color:#555;transform:scaleX(0.69) translateX(-50%);">小严</div>
<svg class="a" style="left:693.20px;top:375.98px" width="9" height="10" viewBox="0 0 9 10"><path d="M5.2 1.4 H2.2 Q0.8 1.4 0.8 2.8 V8 Q0.8 9.3 2.2 9.3 H5.8 Q7.2 9.3 7.2 8 V5.8" stroke="#4b9cec" stroke-width="1.3" fill="none"/><path d="M3.3 7.3 L3.7 5.6 L7.6 1.3 L8.7 2.3 L4.9 6.8 Z" fill="#4b9cec"/></svg>
<svg class="a" style="left:705.00px;top:375.88px" width="7" height="11" viewBox="0 0 7 11"><path d="M0.4 2.3 H6.6" stroke="#a8a8a8" stroke-width="1.3"/><path d="M2.3 1.8 V0.7 H4.7 V1.8" stroke="#a8a8a8" stroke-width="1" fill="none"/><path d="M1.1 3.3 H5.9 L5.6 10.3 H1.4 Z" stroke="#a8a8a8" stroke-width="1" fill="none"/><path d="M2.7 4.5 V9 M4.3 4.5 V9" stroke="#a8a8a8" stroke-width="0.7"/></svg>
<svg class="a" style="left:113.50px;top:398.73px" width="6" height="7" viewBox="0 0 6 7"><rect x="0.6" y="0.6" width="4.8" height="5.8" rx="1.3" stroke="#c4c4c4" stroke-width="1.2" fill="#f4f4f4"/><path d="M1.8 3.5 H4.2" stroke="#dcdcdc" stroke-width="0.6"/></svg>
<div class="t" style="left:146.6px;top:398.62px;font-size:8.2px;line-height:8.2px;color:#444;transform:scaleX(0.75) translateX(-50%);-webkit-text-stroke:0px currentColor;">14</div>
<div class="t" style="left:164.8px;top:398.12px;font-size:8.2px;line-height:8.2px;color:#464646;transform:scaleX(0.705);">西门子(中国)有限公司</div>
<div class="t" style="left:321px;top:398.12px;font-size:8.2px;line-height:8.2px;color:#464646;transform:scaleX(0.69);">2018/08/22【联系不上】</div>
<div class="t" style="left:570px;top:398.12px;font-size:8.2px;line-height:8.2px;color:#555;transform:scaleX(0.69) translateX(-50%);">展会会刊</div>
<div class="t" style="left:614px;top:398.12px;font-size:8.2px;line-height:8.2px;color:#555;transform:scaleX(0.69) translateX(-50%);">小严</div>
<div class="t" style="left:658px;top:398.12px;font-size:8.2px;line-height:8.2px;color:#555;transform:scaleX(0.69) translateX(-50%);">小严</div>
<svg class="a" style="left:693.20px;top:397.23px" width="9" height="10" viewBox="0 0 9 10"><path d="M5.2 1.4 H2.2 Q0.8 1.4 0.8 2.8 V8 Q0.8 9.3 2.2 9.3 H5.8 Q7.2 9.3 7.2 8 V5.8" stroke="#4b9cec" stroke-width="1.3" fill="none"/><path d="M3.3 7.3 L3.7 5.6 L7.6 1.3 L8.7 2.3 L4.9 6.8 Z" fill="#4b9cec"/></svg>
<svg class="a" style="left:705.00px;top:397.12px" width="7" height="11" viewBox="0 0 7 11"><path d="M0.4 2.3 H6.6" stroke="#a8a8a8" stroke-width="1.3"/><path d="M2.3 1.8 V0.7 H4.7 V1.8" stroke="#a8a8a8" stroke-width="1" fill="none"/><path d="M1.1 3.3 H5.9 L5.6 10.3 H1.4 Z" stroke="#a8a8a8" stroke-width="1" fill="none"/><path d="M2.7 4.5 V9 M4.3 4.5 V9" stroke="#a8a8a8" stroke-width="0.7"/></svg>
<svg class="a" style="left:113.50px;top:419.98px" width="6" height="7" viewBox="0 0 6 7"><rect x="0.6" y="0.6" width="4.8" height="5.8" rx="1.3" stroke="#c4c4c4" stroke-width="1.2" fill="#f4f4f4"/><path d="M1.8 3.5 H4.2" stroke="#dcdcdc" stroke-width="0.6"/></svg>
<div class="t" style="left:146.6px;top:419.88px;font-size:8.2px;line-height:8.2px;color:#444;transform:scaleX(0.75) translateX(-50%);-webkit-text-stroke:0px currentColor;">15</div>
<div class="t" style="left:164.8px;top:419.38px;font-size:8.2px;line-height:8.2px;color:#464646;transform:scaleX(0.705);">中国中央电视台</div>
<div class="t" style="left:321px;top:419.38px;font-size:8.2px;line-height:8.2px;color:#464646;transform:scaleX(0.69);">2018/08/22【固定合作】</div>
<div class="t" style="left:570px;top:419.38px;font-size:8.2px;line-height:8.2px;color:#555;transform:scaleX(0.69) translateX(-50%);">展会会刊</div>
<div class="t" style="left:614px;top:419.38px;font-size:8.2px;line-height:8.2px;color:#555;transform:scaleX(0.69) translateX(-50%);">小严</div>
<div class="t" style="left:658px;top:419.38px;font-size:8.2px;line-height:8.2px;color:#555;transform:scaleX(0.69) translateX(-50%);">小严</div>
<svg class="a" style="left:693.20px;top:418.48px" width="9" height="10" viewBox="0 0 9 10"><path d="M5.2 1.4 H2.2 Q0.8 1.4 0.8 2.8 V8 Q0.8 9.3 2.2 9.3 H5.8 Q7.2 9.3 7.2 8 V5.8" stroke="#4b9cec" stroke-width="1.3" fill="none"/><path d="M3.3 7.3 L3.7 5.6 L7.6 1.3 L8.7 2.3 L4.9 6.8 Z" fill="#4b9cec"/></svg>
<svg class="a" style="left:705.00px;top:418.38px" width="7" height="11" viewBox="0 0 7 11"><path d="M0.4 2.3 H6.6" stroke="#a8a8a8" stroke-width="1.3"/><path d="M2.3 1.8 V0.7 H4.7 V1.8" stroke="#a8a8a8" stroke-width="1" fill="none"/><path d="M1.1 3.3 H5.9 L5.6 10.3 H1.4 Z" stroke="#a8a8a8" stroke-width="1" fill="none"/><path d="M2.7 4.5 V9 M4.3 4.5 V9" stroke="#a8a8a8" stroke-width="0.7"/></svg>
<svg class="a" style="left:113.50px;top:441.23px" width="6" height="7" viewBox="0 0 6 7"><rect x="0.6" y="0.6" width="4.8" height="5.8" rx="1.3" stroke="#c4c4c4" stroke-width="1.2" fill="#f4f4f4"/><path d="M1.8 3.5 H4.2" stroke="#dcdcdc" stroke-width="0.6"/></svg>
<div class="t" style="left:146.6px;top:441.12px;font-size:8.2px;line-height:8.2px;color:#444;transform:scaleX(0.75) translateX(-50%);-webkit-text-stroke:0px currentColor;">16</div>
<div class="t" style="left:164.8px;top:440.62px;font-size:8.2px;line-height:8.2px;color:#464646;transform:scaleX(0.705);">宁波奥克斯空调有限公司</div>
<div class="t" style="left:321px;top:440.62px;font-size:8.2px;line-height:8.2px;color:#464646;transform:scaleX(0.69);">2018/08/22【联系不上】</div>
<div class="t" style="left:570px;top:440.62px;font-size:8.2px;line-height:8.2px;color:#555;transform:scaleX(0.69) translateX(-50%);">展会会刊</div>
<div class="t" style="left:614px;top:440.62px;font-size:8.2px;line-height:8.2px;color:#555;transform:scaleX(0.69) translateX(-50%);">小严</div>
<div class="t" style="left:658px;top:440.62px;font-size:8.2px;line-height:8.2px;color:#555;transform:scaleX(0.69) translateX(-50%);">小严</div>
<svg class="a" style="left:693.20px;top:439.73px" width="9" height="10" viewBox="0 0 9 10"><path d="M5.2 1.4 H2.2 Q0.8 1.4 0.8 2.8 V8 Q0.8 9.3 2.2 9.3 H5.8 Q7.2 9.3 7.2 8 V5.8" stroke="#4b9cec" stroke-width="1.3" fill="none"/><path d="M3.3 7.3 L3.7 5.6 L7.6 1.3 L8.7 2.3 L4.9 6.8 Z" fill="#4b9cec"/></svg>
<svg class="a" style="left:705.00px;top:439.62px" width="7" height="11" viewBox="0 0 7 11"><path d="M0.4 2.3 H6.6" stroke="#a8a8a8" stroke-width="1.3"/><path d="M2.3 1.8 V0.7 H4.7 V1.8" stroke="#a8a8a8" stroke-width="1" fill="none"/><path d="M1.1 3.3 H5.9 L5.6 10.3 H1.4 Z" stroke="#a8a8a8" stroke-width="1" fill="none"/><path d="M2.7 4.5 V9 M4.3 4.5 V9" stroke="#a8a8a8" stroke-width="0.7"/></svg>
<svg class="a" style="left:113.50px;top:462.48px" width="6" height="7" viewBox="0 0 6 7"><rect x="0.6" y="0.6" width="4.8" height="5.8" rx="1.3" stroke="#c4c4c4" stroke-width="1.2" fill="#f4f4f4"/><path d="M1.8 3.5 H4.2" stroke="#dcdcdc" stroke-width="0.6"/></svg>
<div class="a" style="left:734.5px;top:28.3px;width:7.5px;height:433px;background:#f1f1f1"></div>
<div class="a" style="left:735px;top:38px;width:6.5px;height:322px;background:#c1c1c1"></div>
<svg class="a" style="left:736.20px;top:31.00px" width="4" height="3" viewBox="0 0 4 3"><path d="M0 3 L4 3 L2 0 Z" fill="#a3a3a3"/></svg>
<svg class="a" style="left:736.20px;top:451.00px" width="4" height="3" viewBox="0 0 4 3"><path d="M0 0 L4 0 L2 3 Z" fill="#505050"/></svg>
<div class="a th" style="left:742px;top:0px;width:742px;height:461px;overflow:hidden;transform-origin:0 0;transform:scale(0.348,0.334);background:#fff">
<div class="a" style="left:0px;top:0px;width:742px;height:28.3px;background:#0498cb"></div>
<div class="a" style="left:0px;top:0px;width:20.5px;height:28.3px;background:#0a8dc0"></div>
<svg class="a" style="left:6.25px;top:8.75px" width="9" height="11" viewBox="0 0 9 11"><path d="M4.5 0 L9 4.6 H7.9 V11 H5.6 V7.4 H3.4 V11 H1.1 V4.6 H0 Z" fill="#fff"/></svg>
<div class="t" style="left:27.2px;top:10.45px;font-size:8.3px;line-height:8.3px;color:#fff;transform:scaleX(0.72);-webkit-text-stroke:0.2px currentColor;">淘乐云（中国）有限公司</div>
<div class="t" style="left:103.2px;top:10.45px;font-size:8.3px;line-height:8.3px;color:#fff;transform:scaleX(0.69);-webkit-text-stroke:0.2px currentColor;">管理控制台</div>
<div class="t" style="left:144.8px;top:10.45px;font-size:8.3px;line-height:8.3px;color:#fff;transform:scaleX(0.69);-webkit-text-stroke:0.2px currentColor;">淘乐商</div>
<div class="t" style="left:589.6px;top:10.45px;font-size:8.3px;line-height:8.3px;color:#fff;transform:scaleX(0.69);-webkit-text-stroke:0.2px currentColor;">网站首页</div>
<div class="t" style="left:626.4px;top:10.45px;font-size:8.3px;line-height:8.3px;color:#fff;transform:scaleX(0.69);-webkit-text-stroke:0.2px currentColor;">会员升级</div>
<div class="t" style="left:662.4px;top:10.45px;font-size:8.3px;line-height:8.3px;color:#fff;transform:scaleX(0.69);-webkit-text-stroke:0.2px currentColor;">会员续费</div>
<div class="t" style="left:698px;top:10.45px;font-size:8.3px;line-height:8.3px;color:#fff;transform:scaleX(0.69);-webkit-text-stroke:0.2px currentColor;">小严(管理员)</div>
<svg class="a" style="left:731.00px;top:13.10px" width="4" height="3" viewBox="0 0 4 3"><path d="M0 0 L4 0 L2 3 Z" fill="#fff"/></svg>
<div class="a" style="left:0px;top:28px;width:20.5px;height:433px;background:#22282f"></div>
<div class="a" style="left:0px;top:28px;width:20.5px;height:17.5px;background:#3b4350"></div>
<div class="a" style="left:0px;top:45.5px;width:20.5px;height:227.9px;background:#1f252c"></div>
<div class="a" style="left:0px;top:113.87px;width:20.5px;height:22.79px;background:#0498cb"></div>
<svg class="a" style="left:7.10px;top:33.30px" width="6" height="7" viewBox="0 0 6 7"><rect x="0.5" y="0" width="5" height="1.5" fill="#cfd3d8"/><rect x="0.5" y="2.7" width="5" height="1.5" fill="#cfd3d8"/><rect x="0.5" y="5.4" width="5" height="1.5" fill="#cfd3d8"/></svg>
<svg class="a" style="left:7.90px;top:52.00px" width="6" height="8" viewBox="0 0 6 8"><path d="M1.2 0.8 L4.6 4 L1.2 7.2" stroke="#fff" stroke-width="1.8" fill="none"/></svg>
<svg class="a" style="left:6.90px;top:75.50px" width="7" height="6" viewBox="0 0 7 6"><path d="M0.8 1.2 L3.5 4.4 L6.2 1.2" stroke="#fff" stroke-width="1.8" fill="none"/></svg>
<svg class="a" style="left:6.80px;top:97.00px" width="8" height="8" viewBox="0 0 8 8"><path d="M4 0.7 H7.2 V7.3 H4" stroke="#fff" stroke-width="1.3" fill="none"/><path d="M0.5 4 H4.5" stroke="#fff" stroke-width="1.4"/><path d="M3 2 L5.2 4 L3 6 Z" fill="#fff"/></svg>
<svg class="a" style="left:8.10px;top:120.40px" width="6" height="8" viewBox="0 0 6 8"><rect x="0.5" y="0.5" width="5" height="7" stroke="#e8f4fb" stroke-width="1" fill="none"/><rect x="1.5" y="2" width="3" height="1" fill="#e8f4fb"/><rect x="1.5" y="4" width="3" height="1" fill="#e8f4fb"/></svg>
<svg class="a" style="left:6.90px;top:142.80px" width="8" height="8" viewBox="0 0 8 8"><path d="M5.5 1.3 A3 3 0 1 0 5.5 6.7" stroke="#fff" stroke-width="1.4" fill="none"/><path d="M3.2 4 H7.5" stroke="#fff" stroke-width="1.3"/><path d="M5.5 2.2 L7.8 4 L5.5 5.8 Z" fill="#fff"/></svg>
<svg class="a" style="left:7.60px;top:165.60px" width="6" height="8" viewBox="0 0 6 8"><rect x="0" y="0.8" width="6" height="1" fill="#e0e0e0"/><rect x="2" y="0" width="2" height="1" fill="#e0e0e0"/><path d="M0.8 2.3 H5.2 L4.8 8 H1.2 Z" fill="#e0e0e0"/></svg>
<svg class="a" style="left:7.10px;top:189.00px" width="7" height="7" viewBox="0 0 7 7"><rect x="0.5" y="3" width="1.5" height="4" fill="#fff"/><rect x="2.6" y="0.5" width="1.6" height="6.5" fill="#fff"/><rect x="4.8" y="4" width="1.5" height="3" fill="#fff"/><rect x="0" y="6.3" width="7" height="0.8" fill="#fff"/></svg>
<svg class="a" style="left:7.90px;top:211.60px" width="6" height="8" viewBox="0 0 6 8"><path d="M1.2 0.8 L4.6 4 L1.2 7.2" stroke="#fff" stroke-width="1.8" fill="none"/></svg>
<svg class="a" style="left:7.90px;top:234.70px" width="6" height="8" viewBox="0 0 6 8"><path d="M1.2 0.8 L4.6 4 L1.2 7.2" stroke="#fff" stroke-width="1.8" fill="none"/></svg>
<svg class="a" style="left:7.90px;top:257.30px" width="6" height="8" viewBox="0 0 6 8"><path d="M1.2 0.8 L4.6 4 L1.2 7.2" stroke="#fff" stroke-width="1.8" fill="none"/></svg>
<div class="a" style="left:21px;top:28px;width:71.5px;height:433px;background:#e9ecf1;border-right:1px solid #e2e5ea"></div>
<div class="a" style="left:21px;top:28px;width:71.5px;height:23px;background:#dde1e6"></div>
<div class="a" style="left:21px;top:51px;width:71.5px;height:29px;background:#f4f6f8"></div>
<div class="t" style="left:27.6px;top:35.20px;font-size:9px;line-height:9px;color:#333;transform:scaleX(0.69);">全部客户</div>
<div class="t" style="left:27.6px;top:58.50px;font-size:9px;line-height:9px;color:#333;transform:scaleX(0.69);">成功客户</div>
<div class="a" style="left:101.8px;top:40px;width:2px;height:10px;background:#2aa0dc"></div>
<div class="t" style="left:106px;top:40.00px;font-size:11px;line-height:11px;color:#555;transform:scaleX(0.7);">客户列表</div>
<div class="a" style="left:692.5px;top:39px;width:20px;height:16.5px;background:#0498cb"></div>
<div class="a" style="left:715.5px;top:39px;width:20px;height:16.5px;background:#0498cb"></div>
<div class="t" style="left:702.5px;top:42.50px;font-size:9px;line-height:9px;color:#fff;transform:scaleX(0.69) translateX(-50%);">刷新</div>
<div class="t" style="left:725.5px;top:42.50px;font-size:9px;line-height:9px;color:#fff;transform:scaleX(0.69) translateX(-50%);">返回</div>
<div class="a" style="left:103px;top:67px;width:112.5px;height:18px;border:1.5px solid #e1e4e8;background:#fff"></div>
<div class="t" style="left:110px;top:71.25px;font-size:9.5px;line-height:9.5px;color:#aaa;transform:scaleX(0.69);">客户关键词</div>
<div class="a" style="left:221.8px;top:67px;width:34.2px;height:18px;background:#e2e3e5;border:1.5px solid #ccc"></div>
<div class="t" style="left:231px;top:71.25px;font-size:9.5px;line-height:9.5px;color:#222;transform:scaleX(0.69);">搜索</div>
<div class="a" style="left:103px;top:96.4px;width:632.6px;height:15.599999999999994px;background:#f3f5f8"></div>
<div class="a" style="left:103px;top:111.5px;width:632.6px;height:1.5px;background:#e9ecf0"></div>
<div class="a" style="left:103px;top:131.9px;width:632.6px;height:1.5px;background:#e9ecf0"></div>
<div class="a" style="left:103px;top:152.3px;width:632.6px;height:1.5px;background:#e9ecf0"></div>
<div class="a" style="left:103px;top:172.7px;width:632.6px;height:1.5px;background:#e9ecf0"></div>
<div class="a" style="left:103px;top:193.1px;width:632.6px;height:1.5px;background:#e9ecf0"></div>
<div class="a" style="left:103px;top:213.5px;width:632.6px;height:1.5px;background:#e9ecf0"></div>
<div class="a" style="left:103px;top:233.89999999999998px;width:632.6px;height:1.5px;background:#e9ecf0"></div>
<div class="t" style="left:115px;top:99.70px;font-size:9px;line-height:9px;color:#555;transform:scaleX(0.69) translateX(-50%);">序号</div>
<div class="t" style="left:143.7px;top:99.70px;font-size:9px;line-height:9px;color:#555;transform:scaleX(0.69);">客户名称</div>
<div class="t" style="left:354.6px;top:99.70px;font-size:9px;line-height:9px;color:#555;transform:scaleX(0.69) translateX(-50%);">合同数量</div>
<div class="t" style="left:417px;top:99.70px;font-size:9px;line-height:9px;color:#555;transform:scaleX(0.69) translateX(-50%);">合同金额</div>
<div class="t" style="left:480px;top:99.70px;font-size:9px;line-height:9px;color:#555;transform:scaleX(0.69) translateX(-50%);">已收金额</div>
<div class="t" style="left:536.5px;top:99.70px;font-size:9px;line-height:9px;color:#555;transform:scaleX(0.69) translateX(-50%);">未收金额</div>
<div class="t" style="left:605px;top:99.70px;font-size:9px;line-height:9px;color:#555;transform:scaleX(0.69) translateX(-50%);">利润</div>
<div class="t" style="left:686.5px;top:99.70px;font-size:9px;line-height:9px;color:#555;transform:scaleX(0.69) translateX(-50%);">签约时间</div>
<div class="t" style="left:115px;top:119.70px;font-size:9px;line-height:9px;color:#555;transform:scaleX(0.75) translateX(-50%);">1</div>
<div class="t" style="left:143.7px;top:119.70px;font-size:9px;line-height:9px;color:#555;transform:scaleX(0.69);">富士胶片（中国）投资有限公司</div>
<div class="t" style="left:354.6px;top:119.70px;font-size:9px;line-height:9px;color:#555;transform:scaleX(0.75) translateX(-50%);">1</div>
<div class="t" style="left:417px;top:119.70px;font-size:9px;line-height:9px;color:#555;transform:scaleX(0.75) translateX(-50%);">¥1,200,000.00</div>
<div class="t" style="left:480px;top:119.70px;font-size:9px;line-height:9px;color:#555;transform:scaleX(0.75) translateX(-50%);">¥300,000.00</div>
<div class="t" style="left:536.5px;top:119.70px;font-size:9px;line-height:9px;color:#555;transform:scaleX(0.75) translateX(-50%);">¥0.00</div>
<div class="t" style="left:605px;top:119.70px;font-size:9px;line-height:9px;color:#555;transform:scaleX(0.75) translateX(-50%);">¥300,000.00</div>
<div class="t" style="left:686.5px;top:119.70px;font-size:9px;line-height:9px;color:#555;transform:scaleX(0.75) translateX(-50%);">2018-08-22 16:08</div>
<div class="t" style="left:115px;top:140.10px;font-size:9px;line-height:9px;color:#555;transform:scaleX(0.75) translateX(-50%);">2</div>
<div class="t" style="left:143.7px;top:140.10px;font-size:9px;line-height:9px;color:#555;transform:scaleX(0.69);">瓦克化学（中国）有限公司</div>
<div class="t" style="left:354.6px;top:140.10px;font-size:9px;line-height:9px;color:#555;transform:scaleX(0.75) translateX(-50%);">1</div>
<div class="t" style="left:417px;top:140.10px;font-size:9px;line-height:9px;color:#555;transform:scaleX(0.75) translateX(-50%);">¥1,200,000.00</div>
<div class="t" style="left:480px;top:140.10px;font-size:9px;line-height:9px;color:#555;transform:scaleX(0.75) translateX(-50%);">¥1,000,000.00</div>
<div class="t" style="left:536.5px;top:140.10px;font-size:9px;line-height:9px;color:#555;transform:scaleX(0.75) translateX(-50%);">¥0.00</div>
<div class="t" style="left:605px;top:140.10px;font-size:9px;line-height:9px;color:#555;transform:scaleX(0.75) translateX(-50%);">¥1,000,000.00</div>
<div class="t" style="left:686.5px;top:140.10px;font-size:9px;line-height:9px;color:#555;transform:scaleX(0.75) translateX(-50%);">2018-08-22 16:08</div>
<div class="t" style="left:115px;top:160.50px;font-size:9px;line-height:9px;color:#555;transform:scaleX(0.75) translateX(-50%);">3</div>
<div class="t" style="left:143.7px;top:160.50px;font-size:9px;line-height:9px;color:#555;transform:scaleX(0.69);">兄弟(中国)商业有限公司</div>
<div class="t" style="left:354.6px;top:160.50px;font-size:9px;line-height:9px;color:#555;transform:scaleX(0.75) translateX(-50%);">1</div>
<div class="t" style="left:417px;top:160.50px;font-size:9px;line-height:9px;color:#555;transform:scaleX(0.75) translateX(-50%);">¥1,200,000.00</div>
<div class="t" style="left:480px;top:160.50px;font-size:9px;line-height:9px;color:#555;transform:scaleX(0.75) translateX(-50%);">¥750,000.00</div>
<div class="t" style="left:536.5px;top:160.50px;font-size:9px;line-height:9px;color:#555;transform:scaleX(0.75) translateX(-50%);">¥15,000.00</div>
<div class="t" style="left:605px;top:160.50px;font-size:9px;line-height:9px;color:#555;transform:scaleX(0.75) translateX(-50%);">¥375,000.00</div>
<div class="t" style="left:686.5px;top:160.50px;font-size:9px;line-height:9px;color:#555;transform:scaleX(0.75) translateX(-50%);">2018-08-22 16:08</div>
<div class="t" style="left:115px;top:180.90px;font-size:9px;line-height:9px;color:#555;transform:scaleX(0.75) translateX(-50%);">4</div>
<div class="t" style="left:143.7px;top:180.90px;font-size:9px;line-height:9px;color:#555;transform:scaleX(0.69);">大昌华嘉商业（中国）有限公司</div>
<div class="t" style="left:354.6px;top:180.90px;font-size:9px;line-height:9px;color:#555;transform:scaleX(0.75) translateX(-50%);">1</div>
<div class="t" style="left:417px;top:180.90px;font-size:9px;line-height:9px;color:#555;transform:scaleX(0.75) translateX(-50%);">¥470,170.00</div>
<div class="t" style="left:480px;top:180.90px;font-size:9px;line-height:9px;color:#555;transform:scaleX(0.75) translateX(-50%);">¥0,000.00</div>
<div class="t" style="left:536.5px;top:180.90px;font-size:9px;line-height:9px;color:#555;transform:scaleX(0.75) translateX(-50%);">¥47,000.00</div>
<div class="t" style="left:605px;top:180.90px;font-size:9px;line-height:9px;color:#555;transform:scaleX(0.75) translateX(-50%);">¥0,470.00</div>
<div class="t" style="left:686.5px;top:180.90px;font-size:9px;line-height:9px;color:#555;transform:scaleX(0.75) translateX(-50%);">2018-08-22 16:08</div>
<div class="t" style="left:115px;top:201.30px;font-size:9px;line-height:9px;color:#555;transform:scaleX(0.75) translateX(-50%);">5</div>
<div class="t" style="left:143.7px;top:201.30px;font-size:9px;line-height:9px;color:#555;transform:scaleX(0.69);">中国中央电视台</div>
<div class="t" style="left:354.6px;top:201.30px;font-size:9px;line-height:9px;color:#555;transform:scaleX(0.75) translateX(-50%);">1</div>
<div class="t" style="left:417px;top:201.30px;font-size:9px;line-height:9px;color:#555;transform:scaleX(0.75) translateX(-50%);">¥1,200,000.00</div>
<div class="t" style="left:480px;top:201.30px;font-size:9px;line-height:9px;color:#555;transform:scaleX(0.75) translateX(-50%);">¥300,000.00</div>
<div class="t" style="left:536.5px;top:201.30px;font-size:9px;line-height:9px;color:#555;transform:scaleX(0.75) translateX(-50%);">¥0.00</div>
<div class="t" style="left:605px;top:201.30px;font-size:9px;line-height:9px;color:#555;transform:scaleX(0.75) translateX(-50%);">¥300,000.00</div>
<div class="t" style="left:686.5px;top:201.30px;font-size:9px;line-height:9px;color:#555;transform:scaleX(0.75) translateX(-50%);">2018-08-22 16:08</div>
<div class="t" style="left:115px;top:221.70px;font-size:9px;line-height:9px;color:#555;transform:scaleX(0.75) translateX(-50%);">6</div>
<div class="t" style="left:143.7px;top:221.70px;font-size:9px;line-height:9px;color:#555;transform:scaleX(0.69);">松下电器（中国）有限公司</div>
<div class="t" style="left:354.6px;top:221.70px;font-size:9px;line-height:9px;color:#555;transform:scaleX(0.75) translateX(-50%);">1</div>
<div class="t" style="left:417px;top:221.70px;font-size:9px;line-height:9px;color:#555;transform:scaleX(0.75) translateX(-50%);">¥1,200,000.00</div>
<div class="t" style="left:480px;top:221.70px;font-size:9px;line-height:9px;color:#555;transform:scaleX(0.75) translateX(-50%);">¥300,000.00</div>
<div class="t" style="left:536.5px;top:221.70px;font-size:9px;line-height:9px;color:#555;transform:scaleX(0.75) translateX(-50%);">¥15,000.00</div>
<div class="t" style="left:605px;top:221.70px;font-size:9px;line-height:9px;color:#555;transform:scaleX(0.75) translateX(-50%);">¥375,000.00</div>
<div class="t" style="left:686.5px;top:221.70px;font-size:9px;line-height:9px;color:#555;transform:scaleX(0.75) translateX(-50%);">2018-08-22 16:08</div>
<div class="t" style="left:106px;top:242.90px;font-size:8.2px;line-height:8.2px;color:#555;transform:scaleX(0.69);">共6条记录，每页10条，跳转到</div>
<div class="a" style="left:189px;top:239px;width:24px;height:16px;border:1px solid #e1e4e8;background:#fff"></div>
<div class="t" style="left:210px;top:242.90px;font-size:8.2px;line-height:8.2px;color:#555;transform:scaleX(0.75);">1</div>
<div class="a" style="left:216px;top:238px;width:22px;height:18px;background:#e2e3e5;border:1px solid #ccc"></div>
<div class="t" style="left:219px;top:242.90px;font-size:8.2px;line-height:8.2px;color:#333;transform:scaleX(0.69);">跳转</div>
<div class="a" style="left:717px;top:237px;width:12px;height:20px;background:#dcdcdc;border:1px solid #bbb"></div>
</div>
<div class="a th" style="left:742px;top:154px;width:742px;height:461px;overflow:hidden;transform-origin:0 0;transform:scale(0.348,0.334);background:#fff">
<div class="a" style="left:0px;top:0px;width:742px;height:28.3px;background:#0498cb"></div>
<div class="a" style="left:0px;top:0px;width:20.5px;height:28.3px;background:#0a8dc0"></div>
<svg class="a" style="left:6.25px;top:8.75px" width="9" height="11" viewBox="0 0 9 11"><path d="M4.5 0 L9 4.6 H7.9 V11 H5.6 V7.4 H3.4 V11 H1.1 V4.6 H0 Z" fill="#fff"/></svg>
<div class="t" style="left:27.2px;top:10.45px;font-size:8.3px;line-height:8.3px;color:#fff;transform:scaleX(0.72);-webkit-text-stroke:0.2px currentColor;">淘乐云（中国）有限公司</div>
<div class="t" style="left:103.2px;top:10.45px;font-size:8.3px;line-height:8.3px;color:#fff;transform:scaleX(0.69);-webkit-text-stroke:0.2px currentColor;">管理控制台</div>
<div class="t" style="left:144.8px;top:10.45px;font-size:8.3px;line-height:8.3px;color:#fff;transform:scaleX(0.69);-webkit-text-stroke:0.2px currentColor;">淘乐商</div>
<div class="t" style="left:589.6px;top:10.45px;font-size:8.3px;line-height:8.3px;color:#fff;transform:scaleX(0.69);-webkit-text-stroke:0.2px currentColor;">网站首页</div>
<div class="t" style="left:626.4px;top:10.45px;font-size:8.3px;line-height:8.3px;color:#fff;transform:scaleX(0.69);-webkit-text-stroke:0.2px currentColor;">会员升级</div>
<div class="t" style="left:662.4px;top:10.45px;font-size:8.3px;line-height:8.3px;color:#fff;transform:scaleX(0.69);-webkit-text-stroke:0.2px currentColor;">会员续费</div>
<div class="t" style="left:698px;top:10.45px;font-size:8.3px;line-height:8.3px;color:#fff;transform:scaleX(0.69);-webkit-text-stroke:0.2px currentColor;">小严(管理员)</div>
<svg class="a" style="left:731.00px;top:13.10px" width="4" height="3" viewBox="0 0 4 3"><path d="M0 0 L4 0 L2 3 Z" fill="#fff"/></svg>
<div class="a" style="left:0px;top:28px;width:20.5px;height:433px;background:#22282f"></div>
<div class="a" style="left:0px;top:28px;width:20.5px;height:17.5px;background:#3b4350"></div>
<div class="a" style="left:0px;top:45.5px;width:20.5px;height:227.9px;background:#1f252c"></div>
<div class="a" style="left:0px;top:182.24px;width:20.5px;height:22.79px;background:#0498cb"></div>
<svg class="a" style="left:7.10px;top:33.30px" width="6" height="7" viewBox="0 0 6 7"><rect x="0.5" y="0" width="5" height="1.5" fill="#cfd3d8"/><rect x="0.5" y="2.7" width="5" height="1.5" fill="#cfd3d8"/><rect x="0.5" y="5.4" width="5" height="1.5" fill="#cfd3d8"/></svg>
<svg class="a" style="left:7.90px;top:52.00px" width="6" height="8" viewBox="0 0 6 8"><path d="M1.2 0.8 L4.6 4 L1.2 7.2" stroke="#fff" stroke-width="1.8" fill="none"/></svg>
<svg class="a" style="left:6.90px;top:75.50px" width="7" height="6" viewBox="0 0 7 6"><path d="M0.8 1.2 L3.5 4.4 L6.2 1.2" stroke="#fff" stroke-width="1.8" fill="none"/></svg>
<svg class="a" style="left:6.80px;top:97.00px" width="8" height="8" viewBox="0 0 8 8"><path d="M4 0.7 H7.2 V7.3 H4" stroke="#fff" stroke-width="1.3" fill="none"/><path d="M0.5 4 H4.5" stroke="#fff" stroke-width="1.4"/><path d="M3 2 L5.2 4 L3 6 Z" fill="#fff"/></svg>
<svg class="a" style="left:8.10px;top:120.40px" width="6" height="8" viewBox="0 0 6 8"><rect x="0.5" y="0.5" width="5" height="7" stroke="#e8f4fb" stroke-width="1" fill="none"/><rect x="1.5" y="2" width="3" height="1" fill="#e8f4fb"/><rect x="1.5" y="4" width="3" height="1" fill="#e8f4fb"/></svg>
<svg class="a" style="left:6.90px;top:142.80px" width="8" height="8" viewBox="0 0 8 8"><path d="M5.5 1.3 A3 3 0 1 0 5.5 6.7" stroke="#fff" stroke-width="1.4" fill="none"/><path d="M3.2 4 H7.5" stroke="#fff" stroke-width="1.3"/><path d="M5.5 2.2 L7.8 4 L5.5 5.8 Z" fill="#fff"/></svg>
<svg class="a" style="left:7.60px;top:165.60px" width="6" height="8" viewBox="0 0 6 8"><rect x="0" y="0.8" width="6" height="1" fill="#e0e0e0"/><rect x="2" y="0" width="2" height="1" fill="#e0e0e0"/><path d="M0.8 2.3 H5.2 L4.8 8 H1.2 Z" fill="#e0e0e0"/></svg>
<svg class="a" style="left:7.10px;top:189.00px" width="7" height="7" viewBox="0 0 7 7"><rect x="0.5" y="3" width="1.5" height="4" fill="#fff"/><rect x="2.6" y="0.5" width="1.6" height="6.5" fill="#fff"/><rect x="4.8" y="4" width="1.5" height="3" fill="#fff"/><rect x="0" y="6.3" width="7" height="0.8" fill="#fff"/></svg>
<svg class="a" style="left:7.90px;top:211.60px" width="6" height="8" viewBox="0 0 6 8"><path d="M1.2 0.8 L4.6 4 L1.2 7.2" stroke="#fff" stroke-width="1.8" fill="none"/></svg>
<svg class="a" style="left:7.90px;top:234.70px" width="6" height="8" viewBox="0 0 6 8"><path d="M1.2 0.8 L4.6 4 L1.2 7.2" stroke="#fff" stroke-width="1.8" fill="none"/></svg>
<svg class="a" style="left:7.90px;top:257.30px" width="6" height="8" viewBox="0 0 6 8"><path d="M1.2 0.8 L4.6 4 L1.2 7.2" stroke="#fff" stroke-width="1.8" fill="none"/></svg>
<div class="a" style="left:29px;top:40px;width:2px;height:10px;background:#2aa0dc"></div>
<div class="t" style="left:33px;top:40.00px;font-size:11px;line-height:11px;color:#555;transform:scaleX(0.7);">跟进记录</div>
<div class="a" style="left:692.5px;top:39px;width:20px;height:16.5px;background:#0498cb"></div>
<div class="a" style="left:715.5px;top:39px;width:20px;height:16.5px;background:#0498cb"></div>
<div class="t" style="left:702.5px;top:42.50px;font-size:9px;line-height:9px;color:#fff;transform:scaleX(0.69) translateX(-50%);">刷新</div>
<div class="t" style="left:725.5px;top:42.50px;font-size:9px;line-height:9px;color:#fff;transform:scaleX(0.69) translateX(-50%);">返回</div>
<div class="a" style="left:28px;top:68px;width:50px;height:17px;border:1.5px solid #e1e4e8;background:#fff"></div>
<div class="t" style="left:33px;top:71.75px;font-size:9.5px;line-height:9.5px;color:#aaa;transform:scaleX(0.69);">客户关键词</div>
<div class="a" style="left:87px;top:68px;width:41px;height:17px;border:1.5px solid #e1e4e8;background:#fff"></div>
<div class="t" style="left:93px;top:71.75px;font-size:9.5px;line-height:9.5px;color:#555;transform:scaleX(0.69);">跟进方式 ▾</div>
<div class="a" style="left:133px;top:68px;width:32.5px;height:17px;background:#e2e3e5;border:1.5px solid #bbb"></div>
<div class="t" style="left:140px;top:71.75px;font-size:9.5px;line-height:9.5px;color:#222;transform:scaleX(0.69);">搜索</div>
<div class="a" style="left:175px;top:68px;width:53px;height:17px;border:1.5px solid #e1e4e8;background:#fff"></div>
<div class="t" style="left:181px;top:71.75px;font-size:9.5px;line-height:9.5px;color:#555;transform:scaleX(0.69);">跟进时间排序 ▾</div>
<div class="t" style="left:234px;top:71.75px;font-size:9.5px;line-height:9.5px;color:#333;transform:scaleX(0.69);">● 降序  ○ 升序</div>
<div class="a" style="left:694px;top:68px;width:42px;height:17px;border:1.5px solid #e1e4e8;background:#fff"></div>
<div class="t" style="left:699px;top:71.75px;font-size:9.5px;line-height:9.5px;color:#222;transform:scaleX(0.69);">+ 新增跟进</div>
<div class="a" style="left:28px;top:96.4px;width:708px;height:17.099999999999994px;background:#f3f5f8"></div>
<div class="a" style="left:28px;top:156.5px;width:708px;height:21.5px;background:#e6e9ee"></div>
<div class="a" style="left:28px;top:113.0px;width:708px;height:1.5px;background:#e9ecf0"></div>
<div class="a" style="left:28px;top:134.5px;width:708px;height:1.5px;background:#e9ecf0"></div>
<div class="a" style="left:28px;top:156.0px;width:708px;height:1.5px;background:#e9ecf0"></div>
<div class="a" style="left:28px;top:177.5px;width:708px;height:1.5px;background:#e9ecf0"></div>
<div class="a" style="left:28px;top:199.0px;width:708px;height:1.5px;background:#e9ecf0"></div>
<div class="a" style="left:28px;top:220.5px;width:708px;height:1.5px;background:#e9ecf0"></div>
<div class="a" style="left:28px;top:249.5px;width:708px;height:1.5px;background:#e9ecf0"></div>
<div class="a" style="left:28px;top:278.5px;width:708px;height:1.5px;background:#e9ecf0"></div>
<div class="a" style="left:28px;top:307.5px;width:708px;height:1.5px;background:#e9ecf0"></div>
<div class="a" style="left:28px;top:329.0px;width:708px;height:1.5px;background:#e9ecf0"></div>
<div class="t" style="left:40px;top:100.45px;font-size:9px;line-height:9px;color:#555;transform:scaleX(0.69) translateX(-50%);">序号</div>
<div class="t" style="left:84px;top:100.45px;font-size:9px;line-height:9px;color:#555;transform:scaleX(0.69) translateX(-50%);">跟进时间</div>
<div class="t" style="left:203px;top:100.45px;font-size:9px;line-height:9px;color:#555;transform:scaleX(0.69) translateX(-50%);">跟进内容</div>
<div class="t" style="left:334px;top:100.45px;font-size:9px;line-height:9px;color:#555;transform:scaleX(0.69) translateX(-50%);">客户名称</div>
<div class="t" style="left:399px;top:100.45px;font-size:9px;line-height:9px;color:#555;transform:scaleX(0.69) translateX(-50%);">跟进方式</div>
<div class="t" style="left:442.5px;top:100.45px;font-size:9px;line-height:9px;color:#555;transform:scaleX(0.69) translateX(-50%);">跟进人</div>
<div class="t" style="left:489.7px;top:100.45px;font-size:9px;line-height:9px;color:#555;transform:scaleX(0.69) translateX(-50%);">联系人</div>
<div class="t" style="left:536.5px;top:100.45px;font-size:9px;line-height:9px;color:#555;transform:scaleX(0.69) translateX(-50%);">联系电话</div>
<div class="t" style="left:586px;top:100.45px;font-size:9px;line-height:9px;color:#555;transform:scaleX(0.69) translateX(-50%);">下次跟进</div>
<div class="t" style="left:645.7px;top:100.45px;font-size:9px;line-height:9px;color:#555;transform:scaleX(0.69) translateX(-50%);">负责人</div>
<div class="t" style="left:705.2px;top:100.45px;font-size:9px;line-height:9px;color:#555;transform:scaleX(0.69) translateX(-50%);">操作</div>
<div class="t" style="left:40px;top:122.25px;font-size:9px;line-height:9px;color:#555;transform:scaleX(0.75) translateX(-50%);">1</div>
<div class="t" style="left:64.6px;top:122.25px;font-size:9px;line-height:9px;color:#555;transform:scaleX(0.75);">2018-8-22</div>
<div class="t" style="left:118.7px;top:122.25px;font-size:9px;line-height:9px;color:#555;transform:scaleX(0.69);">富士胶片有限公司电话回访客户确认产品</div>
<div class="t" style="left:293px;top:122.25px;font-size:9px;line-height:9px;color:#555;transform:scaleX(0.69);">富士胶片（中国）投资</div>
<div class="t" style="left:399px;top:122.25px;font-size:9px;line-height:9px;color:#555;transform:scaleX(0.69) translateX(-50%);">上门</div>
<div class="t" style="left:442.5px;top:122.25px;font-size:9px;line-height:9px;color:#555;transform:scaleX(0.75) translateX(-50%);">1</div>
<div class="t" style="left:489.7px;top:122.25px;font-size:9px;line-height:9px;color:#555;transform:scaleX(0.75) translateX(-50%);">1</div>
<div class="t" style="left:536.5px;top:122.25px;font-size:9px;line-height:9px;color:#555;transform:scaleX(0.75) translateX(-50%);">1</div>
<div class="t" style="left:645.7px;top:122.25px;font-size:9px;line-height:9px;color:#555;transform:scaleX(0.69) translateX(-50%);">小严</div>
<svg class="a" style="left:695.50px;top:121.75px" width="9" height="10" viewBox="0 0 9 10"><path d="M5.2 1.4 H2.2 Q0.8 1.4 0.8 2.8 V8 Q0.8 9.3 2.2 9.3 H5.8 Q7.2 9.3 7.2 8 V5.8" stroke="#4b9cec" stroke-width="1.3" fill="none"/><path d="M3.3 7.3 L3.7 5.6 L7.6 1.3 L8.7 2.3 L4.9 6.8 Z" fill="#4b9cec"/></svg>
<svg class="a" style="left:707.50px;top:121.25px" width="7" height="11" viewBox="0 0 7 11"><path d="M0.4 2.3 H6.6" stroke="#a8a8a8" stroke-width="1.3"/><path d="M2.3 1.8 V0.7 H4.7 V1.8" stroke="#a8a8a8" stroke-width="1" fill="none"/><path d="M1.1 3.3 H5.9 L5.6 10.3 H1.4 Z" stroke="#a8a8a8" stroke-width="1" fill="none"/><path d="M2.7 4.5 V9 M4.3 4.5 V9" stroke="#a8a8a8" stroke-width="0.7"/></svg>
<div class="t" style="left:40px;top:143.75px;font-size:9px;line-height:9px;color:#555;transform:scaleX(0.75) translateX(-50%);">2</div>
<div class="t" style="left:64.6px;top:143.75px;font-size:9px;line-height:9px;color:#555;transform:scaleX(0.75);">2018-8-22</div>
<div class="t" style="left:118.7px;top:143.75px;font-size:9px;line-height:9px;color:#555;transform:scaleX(0.69);">瓦克化学公司邮件沟通产品报价情况</div>
<div class="t" style="left:293px;top:143.75px;font-size:9px;line-height:9px;color:#555;transform:scaleX(0.69);">富士胶片（中国）投资</div>
<div class="t" style="left:399px;top:143.75px;font-size:9px;line-height:9px;color:#555;transform:scaleX(0.69) translateX(-50%);">上门</div>
<div class="t" style="left:442.5px;top:143.75px;font-size:9px;line-height:9px;color:#555;transform:scaleX(0.75) translateX(-50%);">1</div>
<div class="t" style="left:489.7px;top:143.75px;font-size:9px;line-height:9px;color:#555;transform:scaleX(0.75) translateX(-50%);">1</div>
<div class="t" style="left:536.5px;top:143.75px;font-size:9px;line-height:9px;color:#555;transform:scaleX(0.75) translateX(-50%);">1</div>
<div class="t" style="left:645.7px;top:143.75px;font-size:9px;line-height:9px;color:#555;transform:scaleX(0.69) translateX(-50%);">小严</div>
<svg class="a" style="left:695.50px;top:143.25px" width="9" height="10" viewBox="0 0 9 10"><path d="M5.2 1.4 H2.2 Q0.8 1.4 0.8 2.8 V8 Q0.8 9.3 2.2 9.3 H5.8 Q7.2 9.3 7.2 8 V5.8" stroke="#4b9cec" stroke-width="1.3" fill="none"/><path d="M3.3 7.3 L3.7 5.6 L7.6 1.3 L8.7 2.3 L4.9 6.8 Z" fill="#4b9cec"/></svg>
<svg class="a" style="left:707.50px;top:142.75px" width="7" height="11" viewBox="0 0 7 11"><path d="M0.4 2.3 H6.6" stroke="#a8a8a8" stroke-width="1.3"/><path d="M2.3 1.8 V0.7 H4.7 V1.8" stroke="#a8a8a8" stroke-width="1" fill="none"/><path d="M1.1 3.3 H5.9 L5.6 10.3 H1.4 Z" stroke="#a8a8a8" stroke-width="1" fill="none"/><path d="M2.7 4.5 V9 M4.3 4.5 V9" stroke="#a8a8a8" stroke-width="0.7"/></svg>
<div class="t" style="left:40px;top:165.25px;font-size:9px;line-height:9px;color:#555;transform:scaleX(0.75) translateX(-50%);">3</div>
<div class="t" style="left:64.6px;top:165.25px;font-size:9px;line-height:9px;color:#555;transform:scaleX(0.75);">2018-8-22</div>
<div class="t" style="left:118.7px;top:165.25px;font-size:9px;line-height:9px;color:#555;transform:scaleX(0.69);">通快中国客户联系不上 再联系</div>
<div class="t" style="left:293px;top:165.25px;font-size:9px;line-height:9px;color:#555;transform:scaleX(0.69);">富士胶片（中国）投资</div>
<div class="t" style="left:399px;top:165.25px;font-size:9px;line-height:9px;color:#555;transform:scaleX(0.69) translateX(-50%);">上门</div>
<div class="t" style="left:442.5px;top:165.25px;font-size:9px;line-height:9px;color:#555;transform:scaleX(0.75) translateX(-50%);">1</div>
<div class="t" style="left:489.7px;top:165.25px;font-size:9px;line-height:9px;color:#555;transform:scaleX(0.75) translateX(-50%);">1</div>
<div class="t" style="left:536.5px;top:165.25px;font-size:9px;line-height:9px;color:#555;transform:scaleX(0.75) translateX(-50%);">1</div>
<div class="t" style="left:645.7px;top:165.25px;font-size:9px;line-height:9px;color:#555;transform:scaleX(0.69) translateX(-50%);">小严</div>
<svg class="a" style="left:695.50px;top:164.75px" width="9" height="10" viewBox="0 0 9 10"><path d="M5.2 1.4 H2.2 Q0.8 1.4 0.8 2.8 V8 Q0.8 9.3 2.2 9.3 H5.8 Q7.2 9.3 7.2 8 V5.8" stroke="#4b9cec" stroke-width="1.3" fill="none"/><path d="M3.3 7.3 L3.7 5.6 L7.6 1.3 L8.7 2.3 L4.9 6.8 Z" fill="#4b9cec"/></svg>
<svg class="a" style="left:707.50px;top:164.25px" width="7" height="11" viewBox="0 0 7 11"><path d="M0.4 2.3 H6.6" stroke="#a8a8a8" stroke-width="1.3"/><path d="M2.3 1.8 V0.7 H4.7 V1.8" stroke="#a8a8a8" stroke-width="1" fill="none"/><path d="M1.1 3.3 H5.9 L5.6 10.3 H1.4 Z" stroke="#a8a8a8" stroke-width="1" fill="none"/><path d="M2.7 4.5 V9 M4.3 4.5 V9" stroke="#a8a8a8" stroke-width="0.7"/></svg>
<div class="t" style="left:40px;top:186.75px;font-size:9px;line-height:9px;color:#555;transform:scaleX(0.75) translateX(-50%);">4</div>
<div class="t" style="left:64.6px;top:186.75px;font-size:9px;line-height:9px;color:#555;transform:scaleX(0.75);">2018-8-22</div>
<div class="t" style="left:118.7px;top:186.75px;font-size:9px;line-height:9px;color:#555;transform:scaleX(0.69);">中国数控信息网</div>
<div class="t" style="left:293px;top:186.75px;font-size:9px;line-height:9px;color:#555;transform:scaleX(0.69);">富士胶片（中国）投资</div>
<div class="t" style="left:399px;top:186.75px;font-size:9px;line-height:9px;color:#555;transform:scaleX(0.69) translateX(-50%);">上门</div>
<div class="t" style="left:442.5px;top:186.75px;font-size:9px;line-height:9px;color:#555;transform:scaleX(0.75) translateX(-50%);">1</div>
<div class="t" style="left:489.7px;top:186.75px;font-size:9px;line-height:9px;color:#555;transform:scaleX(0.75) translateX(-50%);">1</div>
<div class="t" style="left:536.5px;top:186.75px;font-size:9px;line-height:9px;color:#555;transform:scaleX(0.75) translateX(-50%);">1</div>
<div class="t" style="left:645.7px;top:186.75px;font-size:9px;line-height:9px;color:#555;transform:scaleX(0.69) translateX(-50%);">小严</div>
<svg class="a" style="left:695.50px;top:186.25px" width="9" height="10" viewBox="0 0 9 10"><path d="M5.2 1.4 H2.2 Q0.8 1.4 0.8 2.8 V8 Q0.8 9.3 2.2 9.3 H5.8 Q7.2 9.3 7.2 8 V5.8" stroke="#4b9cec" stroke-width="1.3" fill="none"/><path d="M3.3 7.3 L3.7 5.6 L7.6 1.3 L8.7 2.3 L4.9 6.8 Z" fill="#4b9cec"/></svg>
<svg class="a" style="left:707.50px;top:185.75px" width="7" height="11" viewBox="0 0 7 11"><path d="M0.4 2.3 H6.6" stroke="#a8a8a8" stroke-width="1.3"/><path d="M2.3 1.8 V0.7 H4.7 V1.8" stroke="#a8a8a8" stroke-width="1" fill="none"/><path d="M1.1 3.3 H5.9 L5.6 10.3 H1.4 Z" stroke="#a8a8a8" stroke-width="1" fill="none"/><path d="M2.7 4.5 V9 M4.3 4.5 V9" stroke="#a8a8a8" stroke-width="0.7"/></svg>
<div class="t" style="left:40px;top:208.25px;font-size:9px;line-height:9px;color:#555;transform:scaleX(0.75) translateX(-50%);">5</div>
<div class="t" style="left:64.6px;top:208.25px;font-size:9px;line-height:9px;color:#555;transform:scaleX(0.75);">2018-8-22</div>
<div class="t" style="left:118.7px;top:208.25px;font-size:9px;line-height:9px;color:#555;transform:scaleX(0.69);">中国船舶重工集团公司 已联系</div>
<div class="t" style="left:293px;top:208.25px;font-size:9px;line-height:9px;color:#555;transform:scaleX(0.69);">富士胶片（中国）投资</div>
<div class="t" style="left:399px;top:208.25px;font-size:9px;line-height:9px;color:#555;transform:scaleX(0.69) translateX(-50%);">上门</div>
<div class="t" style="left:442.5px;top:208.25px;font-size:9px;line-height:9px;color:#555;transform:scaleX(0.75) translateX(-50%);">1</div>
<div class="t" style="left:489.7px;top:208.25px;font-size:9px;line-height:9px;color:#555;transform:scaleX(0.75) translateX(-50%);">1</div>
<div class="t" style="left:536.5px;top:208.25px;font-size:9px;line-height:9px;color:#555;transform:scaleX(0.75) translateX(-50%);">1</div>
<div class="t" style="left:645.7px;top:208.25px;font-size:9px;line-height:9px;color:#555;transform:scaleX(0.69) translateX(-50%);">小严</div>
<svg class="a" style="left:695.50px;top:207.75px" width="9" height="10" viewBox="0 0 9 10"><path d="M5.2 1.4 H2.2 Q0.8 1.4 0.8 2.8 V8 Q0.8 9.3 2.2 9.3 H5.8 Q7.2 9.3 7.2 8 V5.8" stroke="#4b9cec" stroke-width="1.3" fill="none"/><path d="M3.3 7.3 L3.7 5.6 L7.6 1.3 L8.7 2.3 L4.9 6.8 Z" fill="#4b9cec"/></svg>
<svg class="a" style="left:707.50px;top:207.25px" width="7" height="11" viewBox="0 0 7 11"><path d="M0.4 2.3 H6.6" stroke="#a8a8a8" stroke-width="1.3"/><path d="M2.3 1.8 V0.7 H4.7 V1.8" stroke="#a8a8a8" stroke-width="1" fill="none"/><path d="M1.1 3.3 H5.9 L5.6 10.3 H1.4 Z" stroke="#a8a8a8" stroke-width="1" fill="none"/><path d="M2.7 4.5 V9 M4.3 4.5 V9" stroke="#a8a8a8" stroke-width="0.7"/></svg>
<div class="t" style="left:40px;top:233.50px;font-size:9px;line-height:9px;color:#555;transform:scaleX(0.75) translateX(-50%);">6</div>
<div class="t" style="left:64.6px;top:233.50px;font-size:9px;line-height:9px;color:#555;transform:scaleX(0.75);">2018-8-22</div>
<div class="t" style="left:118.7px;top:228.50px;font-size:9px;line-height:9px;color:#555;transform:scaleX(0.69);">杜邦中国集团有限公司 需要再次跟进产品价格，安排会议</div>
<div class="t" style="left:118.7px;top:238.50px;font-size:9px;line-height:9px;color:#555;transform:scaleX(0.69);">时间</div>
<div class="t" style="left:293px;top:233.50px;font-size:9px;line-height:9px;color:#555;transform:scaleX(0.69);">富士胶片（中国）投资</div>
<div class="t" style="left:399px;top:233.50px;font-size:9px;line-height:9px;color:#555;transform:scaleX(0.69) translateX(-50%);">上门</div>
<div class="t" style="left:442.5px;top:233.50px;font-size:9px;line-height:9px;color:#555;transform:scaleX(0.75) translateX(-50%);">1</div>
<div class="t" style="left:489.7px;top:233.50px;font-size:9px;line-height:9px;color:#555;transform:scaleX(0.75) translateX(-50%);">1</div>
<div class="t" style="left:536.5px;top:233.50px;font-size:9px;line-height:9px;color:#555;transform:scaleX(0.75) translateX(-50%);">1</div>
<div class="t" style="left:645.7px;top:233.50px;font-size:9px;line-height:9px;color:#555;transform:scaleX(0.69) translateX(-50%);">小严</div>
<svg class="a" style="left:695.50px;top:233.00px" width="9" height="10" viewBox="0 0 9 10"><path d="M5.2 1.4 H2.2 Q0.8 1.4 0.8 2.8 V8 Q0.8 9.3 2.2 9.3 H5.8 Q7.2 9.3 7.2 8 V5.8" stroke="#4b9cec" stroke-width="1.3" fill="none"/><path d="M3.3 7.3 L3.7 5.6 L7.6 1.3 L8.7 2.3 L4.9 6.8 Z" fill="#4b9cec"/></svg>
<svg class="a" style="left:707.50px;top:232.50px" width="7" height="11" viewBox="0 0 7 11"><path d="M0.4 2.3 H6.6" stroke="#a8a8a8" stroke-width="1.3"/><path d="M2.3 1.8 V0.7 H4.7 V1.8" stroke="#a8a8a8" stroke-width="1" fill="none"/><path d="M1.1 3.3 H5.9 L5.6 10.3 H1.4 Z" stroke="#a8a8a8" stroke-width="1" fill="none"/><path d="M2.7 4.5 V9 M4.3 4.5 V9" stroke="#a8a8a8" stroke-width="0.7"/></svg>
<div class="t" style="left:40px;top:262.50px;font-size:9px;line-height:9px;color:#555;transform:scaleX(0.75) translateX(-50%);">7</div>
<div class="t" style="left:64.6px;top:262.50px;font-size:9px;line-height:9px;color:#555;transform:scaleX(0.75);">2018-8-22</div>
<div class="t" style="left:118.7px;top:257.50px;font-size:9px;line-height:9px;color:#555;transform:scaleX(0.69);">兄弟中国商业有限公司电话联系产品询价客户需要报价单再</div>
<div class="t" style="left:118.7px;top:267.50px;font-size:9px;line-height:9px;color:#555;transform:scaleX(0.69);">次沟通</div>
<div class="t" style="left:293px;top:262.50px;font-size:9px;line-height:9px;color:#555;transform:scaleX(0.69);">富士胶片（中国）投资</div>
<div class="t" style="left:399px;top:262.50px;font-size:9px;line-height:9px;color:#555;transform:scaleX(0.69) translateX(-50%);">上门</div>
<div class="t" style="left:442.5px;top:262.50px;font-size:9px;line-height:9px;color:#555;transform:scaleX(0.75) translateX(-50%);">1</div>
<div class="t" style="left:489.7px;top:262.50px;font-size:9px;line-height:9px;color:#555;transform:scaleX(0.75) translateX(-50%);">1</div>
<div class="t" style="left:536.5px;top:262.50px;font-size:9px;line-height:9px;color:#555;transform:scaleX(0.75) translateX(-50%);">1</div>
<div class="t" style="left:645.7px;top:262.50px;font-size:9px;line-height:9px;color:#555;transform:scaleX(0.69) translateX(-50%);">小严</div>
<svg class="a" style="left:695.50px;top:262.00px" width="9" height="10" viewBox="0 0 9 10"><path d="M5.2 1.4 H2.2 Q0.8 1.4 0.8 2.8 V8 Q0.8 9.3 2.2 9.3 H5.8 Q7.2 9.3 7.2 8 V5.8" stroke="#4b9cec" stroke-width="1.3" fill="none"/><path d="M3.3 7.3 L3.7 5.6 L7.6 1.3 L8.7 2.3 L4.9 6.8 Z" fill="#4b9cec"/></svg>
<svg class="a" style="left:707.50px;top:261.50px" width="7" height="11" viewBox="0 0 7 11"><path d="M0.4 2.3 H6.6" stroke="#a8a8a8" stroke-width="1.3"/><path d="M2.3 1.8 V0.7 H4.7 V1.8" stroke="#a8a8a8" stroke-width="1" fill="none"/><path d="M1.1 3.3 H5.9 L5.6 10.3 H1.4 Z" stroke="#a8a8a8" stroke-width="1" fill="none"/><path d="M2.7 4.5 V9 M4.3 4.5 V9" stroke="#a8a8a8" stroke-width="0.7"/></svg>
<div class="t" style="left:40px;top:291.50px;font-size:9px;line-height:9px;color:#555;transform:scaleX(0.75) translateX(-50%);">8</div>
<div class="t" style="left:64.6px;top:291.50px;font-size:9px;line-height:9px;color:#555;transform:scaleX(0.75);">2018-8-22</div>
<div class="t" style="left:118.7px;top:286.50px;font-size:9px;line-height:9px;color:#555;transform:scaleX(0.69);">大昌华嘉商业中国有限公司产品询价再次沟通安排合同签订</div>
<div class="t" style="left:118.7px;top:296.50px;font-size:9px;line-height:9px;color:#555;transform:scaleX(0.69);">时间</div>
<div class="t" style="left:293px;top:291.50px;font-size:9px;line-height:9px;color:#555;transform:scaleX(0.69);">富士胶片（中国）投资</div>
<div class="t" style="left:399px;top:291.50px;font-size:9px;line-height:9px;color:#555;transform:scaleX(0.69) translateX(-50%);">上门</div>
<div class="t" style="left:442.5px;top:291.50px;font-size:9px;line-height:9px;color:#555;transform:scaleX(0.75) translateX(-50%);">1</div>
<div class="t" style="left:489.7px;top:291.50px;font-size:9px;line-height:9px;color:#555;transform:scaleX(0.75) translateX(-50%);">1</div>
<div class="t" style="left:536.5px;top:291.50px;font-size:9px;line-height:9px;color:#555;transform:scaleX(0.75) translateX(-50%);">1</div>
<div class="t" style="left:645.7px;top:291.50px;font-size:9px;line-height:9px;color:#555;transform:scaleX(0.69) translateX(-50%);">小严</div>
<svg class="a" style="left:695.50px;top:291.00px" width="9" height="10" viewBox="0 0 9 10"><path d="M5.2 1.4 H2.2 Q0.8 1.4 0.8 2.8 V8 Q0.8 9.3 2.2 9.3 H5.8 Q7.2 9.3 7.2 8 V5.8" stroke="#4b9cec" stroke-width="1.3" fill="none"/><path d="M3.3 7.3 L3.7 5.6 L7.6 1.3 L8.7 2.3 L4.9 6.8 Z" fill="#4b9cec"/></svg>
<svg class="a" style="left:707.50px;top:290.50px" width="7" height="11" viewBox="0 0 7 11"><path d="M0.4 2.3 H6.6" stroke="#a8a8a8" stroke-width="1.3"/><path d="M2.3 1.8 V0.7 H4.7 V1.8" stroke="#a8a8a8" stroke-width="1" fill="none"/><path d="M1.1 3.3 H5.9 L5.6 10.3 H1.4 Z" stroke="#a8a8a8" stroke-width="1" fill="none"/><path d="M2.7 4.5 V9 M4.3 4.5 V9" stroke="#a8a8a8" stroke-width="0.7"/></svg>
<div class="t" style="left:40px;top:316.75px;font-size:9px;line-height:9px;color:#555;transform:scaleX(0.75) translateX(-50%);">9</div>
<div class="t" style="left:64.6px;top:316.75px;font-size:9px;line-height:9px;color:#555;transform:scaleX(0.75);">2018-8-22</div>
<div class="t" style="left:118.7px;top:316.75px;font-size:9px;line-height:9px;color:#555;transform:scaleX(0.69);">飞利浦中国投资有限公司客户要求安排产品演示会</div>
<div class="t" style="left:293px;top:316.75px;font-size:9px;line-height:9px;color:#555;transform:scaleX(0.69);">富士胶片（中国）投资</div>
<div class="t" style="left:399px;top:316.75px;font-size:9px;line-height:9px;color:#555;transform:scaleX(0.69) translateX(-50%);">上门</div>
<div class="t" style="left:442.5px;top:316.75px;font-size:9px;line-height:9px;color:#555;transform:scaleX(0.75) translateX(-50%);">1</div>
<div class="t" style="left:489.7px;top:316.75px;font-size:9px;line-height:9px;color:#555;transform:scaleX(0.75) translateX(-50%);">1</div>
<div class="t" style="left:536.5px;top:316.75px;font-size:9px;line-height:9px;color:#555;transform:scaleX(0.75) translateX(-50%);">1</div>
<div class="t" style="left:645.7px;top:316.75px;font-size:9px;line-height:9px;color:#555;transform:scaleX(0.69) translateX(-50%);">小严</div>
<svg class="a" style="left:695.50px;top:316.25px" width="9" height="10" viewBox="0 0 9 10"><path d="M5.2 1.4 H2.2 Q0.8 1.4 0.8 2.8 V8 Q0.8 9.3 2.2 9.3 H5.8 Q7.2 9.3 7.2 8 V5.8" stroke="#4b9cec" stroke-width="1.3" fill="none"/><path d="M3.3 7.3 L3.7 5.6 L7.6 1.3 L8.7 2.3 L4.9 6.8 Z" fill="#4b9cec"/></svg>
<svg class="a" style="left:707.50px;top:315.75px" width="7" height="11" viewBox="0 0 7 11"><path d="M0.4 2.3 H6.6" stroke="#a8a8a8" stroke-width="1.3"/><path d="M2.3 1.8 V0.7 H4.7 V1.8" stroke="#a8a8a8" stroke-width="1" fill="none"/><path d="M1.1 3.3 H5.9 L5.6 10.3 H1.4 Z" stroke="#a8a8a8" stroke-width="1" fill="none"/><path d="M2.7 4.5 V9 M4.3 4.5 V9" stroke="#a8a8a8" stroke-width="0.7"/></svg>
<div class="t" style="left:33px;top:341.70px;font-size:8.2px;line-height:8.2px;color:#555;transform:scaleX(0.69);">共6条记录，每页10条，跳转到</div>
<div class="a" style="left:116px;top:337.8px;width:24px;height:16px;border:1px solid #e1e4e8;background:#fff"></div>
<div class="t" style="left:137px;top:341.70px;font-size:8.2px;line-height:8.2px;color:#555;transform:scaleX(0.75);">1</div>
<div class="a" style="left:143px;top:336.8px;width:22px;height:18px;background:#e2e3e5;border:1px solid #ccc"></div>
<div class="t" style="left:146px;top:341.70px;font-size:8.2px;line-height:8.2px;color:#333;transform:scaleX(0.69);">跳转</div>
<div class="a" style="left:717px;top:333px;width:12px;height:20px;background:#dcdcdc;border:1px solid #bbb"></div>
</div>
<div class="a th" style="left:742px;top:308px;width:742px;height:461px;overflow:hidden;transform-origin:0 0;transform:scale(0.348,0.334);background:#fff">
<div class="a" style="left:0px;top:0px;width:742px;height:28.3px;background:#0498cb"></div>
<div class="a" style="left:0px;top:0px;width:20.5px;height:28.3px;background:#0a8dc0"></div>
<svg class="a" style="left:6.25px;top:8.75px" width="9" height="11" viewBox="0 0 9 11"><path d="M4.5 0 L9 4.6 H7.9 V11 H5.6 V7.4 H3.4 V11 H1.1 V4.6 H0 Z" fill="#fff"/></svg>
<div class="t" style="left:27.2px;top:10.45px;font-size:8.3px;line-height:8.3px;color:#fff;transform:scaleX(0.72);-webkit-text-stroke:0.2px currentColor;">淘乐云（中国）有限公司</div>
<div class="t" style="left:103.2px;top:10.45px;font-size:8.3px;line-height:8.3px;color:#fff;transform:scaleX(0.69);-webkit-text-stroke:0.2px currentColor;">管理控制台</div>
<div class="t" style="left:144.8px;top:10.45px;font-size:8.3px;line-height:8.3px;color:#fff;transform:scaleX(0.69);-webkit-text-stroke:0.2px currentColor;">淘乐商</div>
<div class="t" style="left:589.6px;top:10.45px;font-size:8.3px;line-height:8.3px;color:#fff;transform:scaleX(0.69);-webkit-text-stroke:0.2px currentColor;">网站首页</div>
<div class="t" style="left:626.4px;top:10.45px;font-size:8.3px;line-height:8.3px;color:#fff;transform:scaleX(0.69);-webkit-text-stroke:0.2px currentColor;">会员升级</div>
<div class="t" style="left:662.4px;top:10.45px;font-size:8.3px;line-height:8.3px;color:#fff;transform:scaleX(0.69);-webkit-text-stroke:0.2px currentColor;">会员续费</div>
<div class="t" style="left:698px;top:10.45px;font-size:8.3px;line-height:8.3px;color:#fff;transform:scaleX(0.69);-webkit-text-stroke:0.2px currentColor;">小严(管理员)</div>
<svg class="a" style="left:731.00px;top:13.10px" width="4" height="3" viewBox="0 0 4 3"><path d="M0 0 L4 0 L2 3 Z" fill="#fff"/></svg>
<div class="a" style="left:0px;top:28px;width:20.5px;height:433px;background:#22282f"></div>
<div class="a" style="left:0px;top:28px;width:20.5px;height:17.5px;background:#3b4350"></div>
<div class="a" style="left:0px;top:45.5px;width:20.5px;height:227.9px;background:#1f252c"></div>
<div class="a" style="left:0px;top:136.66px;width:20.5px;height:22.79px;background:#0498cb"></div>
<svg class="a" style="left:7.10px;top:33.30px" width="6" height="7" viewBox="0 0 6 7"><rect x="0.5" y="0" width="5" height="1.5" fill="#cfd3d8"/><rect x="0.5" y="2.7" width="5" height="1.5" fill="#cfd3d8"/><rect x="0.5" y="5.4" width="5" height="1.5" fill="#cfd3d8"/></svg>
<svg class="a" style="left:7.90px;top:52.00px" width="6" height="8" viewBox="0 0 6 8"><path d="M1.2 0.8 L4.6 4 L1.2 7.2" stroke="#fff" stroke-width="1.8" fill="none"/></svg>
<svg class="a" style="left:6.90px;top:75.50px" width="7" height="6" viewBox="0 0 7 6"><path d="M0.8 1.2 L3.5 4.4 L6.2 1.2" stroke="#fff" stroke-width="1.8" fill="none"/></svg>
<svg class="a" style="left:6.80px;top:97.00px" width="8" height="8" viewBox="0 0 8 8"><path d="M4 0.7 H7.2 V7.3 H4" stroke="#fff" stroke-width="1.3" fill="none"/><path d="M0.5 4 H4.5" stroke="#fff" stroke-width="1.4"/><path d="M3 2 L5.2 4 L3 6 Z" fill="#fff"/></svg>
<svg class="a" style="left:8.10px;top:120.40px" width="6" height="8" viewBox="0 0 6 8"><rect x="0.5" y="0.5" width="5" height="7" stroke="#e8f4fb" stroke-width="1" fill="none"/><rect x="1.5" y="2" width="3" height="1" fill="#e8f4fb"/><rect x="1.5" y="4" width="3" height="1" fill="#e8f4fb"/></svg>
<svg class="a" style="left:6.90px;top:142.80px" width="8" height="8" viewBox="0 0 8 8"><path d="M5.5 1.3 A3 3 0 1 0 5.5 6.7" stroke="#fff" stroke-width="1.4" fill="none"/><path d="M3.2 4 H7.5" stroke="#fff" stroke-width="1.3"/><path d="M5.5 2.2 L7.8 4 L5.5 5.8 Z" fill="#fff"/></svg>
<svg class="a" style="left:7.60px;top:165.60px" width="6" height="8" viewBox="0 0 6 8"><rect x="0" y="0.8" width="6" height="1" fill="#e0e0e0"/><rect x="2" y="0" width="2" height="1" fill="#e0e0e0"/><path d="M0.8 2.3 H5.2 L4.8 8 H1.2 Z" fill="#e0e0e0"/></svg>
<svg class="a" style="left:7.10px;top:189.00px" width="7" height="7" viewBox="0 0 7 7"><rect x="0.5" y="3" width="1.5" height="4" fill="#fff"/><rect x="2.6" y="0.5" width="1.6" height="6.5" fill="#fff"/><rect x="4.8" y="4" width="1.5" height="3" fill="#fff"/><rect x="0" y="6.3" width="7" height="0.8" fill="#fff"/></svg>
<svg class="a" style="left:7.90px;top:211.60px" width="6" height="8" viewBox="0 0 6 8"><path d="M1.2 0.8 L4.6 4 L1.2 7.2" stroke="#fff" stroke-width="1.8" fill="none"/></svg>
<svg class="a" style="left:7.90px;top:234.70px" width="6" height="8" viewBox="0 0 6 8"><path d="M1.2 0.8 L4.6 4 L1.2 7.2" stroke="#fff" stroke-width="1.8" fill="none"/></svg>
<svg class="a" style="left:7.90px;top:257.30px" width="6" height="8" viewBox="0 0 6 8"><path d="M1.2 0.8 L4.6 4 L1.2 7.2" stroke="#fff" stroke-width="1.8" fill="none"/></svg>
<div class="a" style="left:29px;top:40px;width:2px;height:10px;background:#2aa0dc"></div>
<div class="t" style="left:33px;top:40.00px;font-size:11px;line-height:11px;color:#555;transform:scaleX(0.7);">我的公共客户</div>
<div class="a" style="left:692.5px;top:39px;width:20px;height:16.5px;background:#0498cb"></div>
<div class="a" style="left:715.5px;top:39px;width:20px;height:16.5px;background:#0498cb"></div>
<div class="t" style="left:702.5px;top:42.50px;font-size:9px;line-height:9px;color:#fff;transform:scaleX(0.69) translateX(-50%);">刷新</div>
<div class="t" style="left:725.5px;top:42.50px;font-size:9px;line-height:9px;color:#fff;transform:scaleX(0.69) translateX(-50%);">返回</div>
<div class="a" style="left:28px;top:68px;width:50px;height:17px;border:1.5px solid #e1e4e8;background:#fff"></div>
<div class="t" style="left:33px;top:71.75px;font-size:9.5px;line-height:9.5px;color:#aaa;transform:scaleX(0.69);">客户关键词</div>
<div class="a" style="left:91px;top:68px;width:44px;height:17px;border:1.5px solid #e1e4e8;background:#fff"></div>
<div class="t" style="left:97px;top:71.75px;font-size:9.5px;line-height:9.5px;color:#555;transform:scaleX(0.69);">客户来源 ▾</div>
<div class="a" style="left:143px;top:68px;width:45px;height:17px;border:1.5px solid #e1e4e8;background:#fff"></div>
<div class="t" style="left:149px;top:71.75px;font-size:9.5px;line-height:9.5px;color:#555;transform:scaleX(0.69);">跟进情况 ▾</div>
<div class="a" style="left:194px;top:68px;width:44px;height:17px;border:1.5px solid #e1e4e8;background:#fff"></div>
<div class="t" style="left:200px;top:71.75px;font-size:9.5px;line-height:9.5px;color:#555;transform:scaleX(0.69);">客户开发 ▾</div>
<div class="a" style="left:243px;top:68px;width:33px;height:17px;background:#e2e3e5;border:1.5px solid #bbb"></div>
<div class="t" style="left:250px;top:71.75px;font-size:9.5px;line-height:9.5px;color:#222;transform:scaleX(0.69);">搜索</div>
<div class="a" style="left:645px;top:68px;width:38px;height:17px;border:1.5px solid #e1e4e8;background:#fff"></div>
<div class="t" style="left:649px;top:71.75px;font-size:9.5px;line-height:9.5px;color:#222;transform:scaleX(0.69);">+ 新增客户</div>
<div class="a" style="left:684px;top:68px;width:52px;height:17px;border:1.5px solid #bbb;background:#e2e3e5"></div>
<div class="t" style="left:689px;top:71.75px;font-size:9.5px;line-height:9.5px;color:#222;transform:scaleX(0.69);">更多操作 ▾</div>
<div class="a" style="left:28px;top:96.4px;width:708px;height:16.099999999999994px;background:#f3f5f8"></div>
<div class="a" style="left:28px;top:112.0px;width:708px;height:1.5px;background:#e9ecf0"></div>
<div class="a" style="left:28px;top:132.4px;width:708px;height:1.5px;background:#e9ecf0"></div>
<div class="a" style="left:28px;top:152.8px;width:708px;height:1.5px;background:#e9ecf0"></div>
<div class="a" style="left:28px;top:173.2px;width:708px;height:1.5px;background:#e9ecf0"></div>
<div class="a" style="left:28px;top:193.6px;width:708px;height:1.5px;background:#e9ecf0"></div>
<div class="a" style="left:28px;top:214.0px;width:708px;height:1.5px;background:#e9ecf0"></div>
<div class="a" style="left:498.5px;top:96.4px;width:1.5px;height:118.1px;background:#eef0f3"></div>
<svg class="a" style="left:45.90px;top:100.95px" width="6" height="7" viewBox="0 0 6 7"><rect x="0.6" y="0.6" width="4.8" height="5.8" rx="1.3" stroke="#c4c4c4" stroke-width="1.2" fill="#f4f4f4"/><path d="M1.8 3.5 H4.2" stroke="#dcdcdc" stroke-width="0.6"/></svg>
<div class="t" style="left:73.9px;top:99.95px;font-size:9px;line-height:9px;color:#555;transform:scaleX(0.69);">客户名称</div>
<div class="t" style="left:287px;top:99.95px;font-size:9px;line-height:9px;color:#555;transform:scaleX(0.69);">最新跟进记录</div>
<div class="t" style="left:527px;top:99.95px;font-size:9px;line-height:9px;color:#555;transform:scaleX(0.69) translateX(-50%);">提醒时间</div>
<div class="t" style="left:586px;top:99.95px;font-size:9px;line-height:9px;color:#555;transform:scaleX(0.69) translateX(-50%);">客户来源</div>
<div class="t" style="left:645.7px;top:99.95px;font-size:9px;line-height:9px;color:#555;transform:scaleX(0.69) translateX(-50%);">客户维护</div>
<div class="t" style="left:705.2px;top:99.95px;font-size:9px;line-height:9px;color:#555;transform:scaleX(0.69) translateX(-50%);">客户开发</div>
<svg class="a" style="left:45.90px;top:121.20px" width="6" height="7" viewBox="0 0 6 7"><rect x="0.6" y="0.6" width="4.8" height="5.8" rx="1.3" stroke="#333" stroke-width="1.2" fill="#f4f4f4"/><path d="M1.8 3.5 H4.2" stroke="#dcdcdc" stroke-width="0.6"/></svg>
<div class="t" style="left:73.9px;top:120.20px;font-size:9px;line-height:9px;color:#555;transform:scaleX(0.69);">富士胶片（中国）投资</div>
<div class="t" style="left:287px;top:120.20px;font-size:9px;line-height:9px;color:#555;transform:scaleX(0.69);">2018/08/22【成功签约】</div>
<div class="t" style="left:586px;top:120.20px;font-size:9px;line-height:9px;color:#555;transform:scaleX(0.69) translateX(-50%);">展会会刊</div>
<div class="t" style="left:645.7px;top:120.20px;font-size:9px;line-height:9px;color:#555;transform:scaleX(0.69) translateX(-50%);">小严</div>
<div class="t" style="left:705.2px;top:120.20px;font-size:9px;line-height:9px;color:#555;transform:scaleX(0.69) translateX(-50%);">小严</div>
<svg class="a" style="left:45.90px;top:141.60px" width="6" height="7" viewBox="0 0 6 7"><rect x="0.6" y="0.6" width="4.8" height="5.8" rx="1.3" stroke="#333" stroke-width="1.2" fill="#f4f4f4"/><path d="M1.8 3.5 H4.2" stroke="#dcdcdc" stroke-width="0.6"/></svg>
<div class="t" style="left:73.9px;top:140.60px;font-size:9px;line-height:9px;color:#555;transform:scaleX(0.69);">中国数控信息网</div>
<div class="t" style="left:287px;top:140.60px;font-size:9px;line-height:9px;color:#555;transform:scaleX(0.69);">2018/08/22【联系不上】</div>
<div class="t" style="left:586px;top:140.60px;font-size:9px;line-height:9px;color:#555;transform:scaleX(0.69) translateX(-50%);">展会会刊</div>
<div class="t" style="left:645.7px;top:140.60px;font-size:9px;line-height:9px;color:#555;transform:scaleX(0.69) translateX(-50%);">小严</div>
<div class="t" style="left:705.2px;top:140.60px;font-size:9px;line-height:9px;color:#555;transform:scaleX(0.69) translateX(-50%);">小严</div>
<svg class="a" style="left:45.90px;top:162.00px" width="6" height="7" viewBox="0 0 6 7"><rect x="0.6" y="0.6" width="4.8" height="5.8" rx="1.3" stroke="#333" stroke-width="1.2" fill="#f4f4f4"/><path d="M1.8 3.5 H4.2" stroke="#dcdcdc" stroke-width="0.6"/></svg>
<div class="t" style="left:73.9px;top:161.00px;font-size:9px;line-height:9px;color:#555;transform:scaleX(0.69);">中国船舶重工集团公司</div>
<div class="t" style="left:287px;top:161.00px;font-size:9px;line-height:9px;color:#555;transform:scaleX(0.69);">2018/08/22【固定合作】</div>
<div class="t" style="left:586px;top:161.00px;font-size:9px;line-height:9px;color:#555;transform:scaleX(0.69) translateX(-50%);">展会会刊</div>
<div class="t" style="left:645.7px;top:161.00px;font-size:9px;line-height:9px;color:#555;transform:scaleX(0.69) translateX(-50%);">小严</div>
<div class="t" style="left:705.2px;top:161.00px;font-size:9px;line-height:9px;color:#555;transform:scaleX(0.69) translateX(-50%);">小严</div>
<svg class="a" style="left:45.90px;top:182.40px" width="6" height="7" viewBox="0 0 6 7"><rect x="0.6" y="0.6" width="4.8" height="5.8" rx="1.3" stroke="#333" stroke-width="1.2" fill="#f4f4f4"/><path d="M1.8 3.5 H4.2" stroke="#dcdcdc" stroke-width="0.6"/></svg>
<div class="t" style="left:73.9px;top:181.40px;font-size:9px;line-height:9px;color:#555;transform:scaleX(0.69);">杜邦中国集团有限公司</div>
<div class="t" style="left:287px;top:181.40px;font-size:9px;line-height:9px;color:#555;transform:scaleX(0.69);">2018/08/22【联系不上】</div>
<div class="t" style="left:586px;top:181.40px;font-size:9px;line-height:9px;color:#555;transform:scaleX(0.69) translateX(-50%);">展会会刊</div>
<div class="t" style="left:645.7px;top:181.40px;font-size:9px;line-height:9px;color:#555;transform:scaleX(0.69) translateX(-50%);">小严</div>
<div class="t" style="left:705.2px;top:181.40px;font-size:9px;line-height:9px;color:#555;transform:scaleX(0.69) translateX(-50%);">小严</div>
<svg class="a" style="left:45.90px;top:202.80px" width="6" height="7" viewBox="0 0 6 7"><rect x="0.6" y="0.6" width="4.8" height="5.8" rx="1.3" stroke="#333" stroke-width="1.2" fill="#f4f4f4"/><path d="M1.8 3.5 H4.2" stroke="#dcdcdc" stroke-width="0.6"/></svg>
<div class="t" style="left:73.9px;top:201.80px;font-size:9px;line-height:9px;color:#555;transform:scaleX(0.69);">兄弟(中国)商业有限公司</div>
<div class="t" style="left:287px;top:201.80px;font-size:9px;line-height:9px;color:#555;transform:scaleX(0.69);">2018/08/22【意向洽谈】</div>
<div class="t" style="left:586px;top:201.80px;font-size:9px;line-height:9px;color:#555;transform:scaleX(0.69) translateX(-50%);">展会会刊</div>
<div class="t" style="left:645.7px;top:201.80px;font-size:9px;line-height:9px;color:#555;transform:scaleX(0.69) translateX(-50%);">小严</div>
<div class="t" style="left:705.2px;top:201.80px;font-size:9px;line-height:9px;color:#555;transform:scaleX(0.69) translateX(-50%);">小严</div>
<div class="t" style="left:33px;top:221.90px;font-size:8.2px;line-height:8.2px;color:#555;transform:scaleX(0.69);">共6条记录，每页10条，跳转到</div>
<div class="a" style="left:116px;top:218px;width:24px;height:16px;border:1px solid #e1e4e8;background:#fff"></div>
<div class="t" style="left:137px;top:221.90px;font-size:8.2px;line-height:8.2px;color:#555;transform:scaleX(0.75);">1</div>
<div class="a" style="left:143px;top:217px;width:22px;height:18px;background:#e2e3e5;border:1px solid #ccc"></div>
<div class="t" style="left:146px;top:221.90px;font-size:8.2px;line-height:8.2px;color:#333;transform:scaleX(0.69);">跳转</div>
<div class="a" style="left:718px;top:221px;width:12px;height:16px;background:#dcdcdc;border:1px solid #bbb"></div>
<div class="a" style="left:684px;top:88px;width:53px;height:59px;background:#fff;border:1px solid #ddd;box-shadow:0 2px 4px rgba(0,0,0,.2)"></div>
<div class="t" style="left:692px;top:96.50px;font-size:9px;line-height:9px;color:#333;transform:scaleX(0.69);">转为公共客户</div>
<div class="t" style="left:692px;top:113.80px;font-size:9px;line-height:9px;color:#333;transform:scaleX(0.69);">转移给他人</div>
<div class="t" style="left:692px;top:131.10px;font-size:9px;line-height:9px;color:#333;transform:scaleX(0.69);">删除选中客户</div>
</div>
</div>
</body></html>
